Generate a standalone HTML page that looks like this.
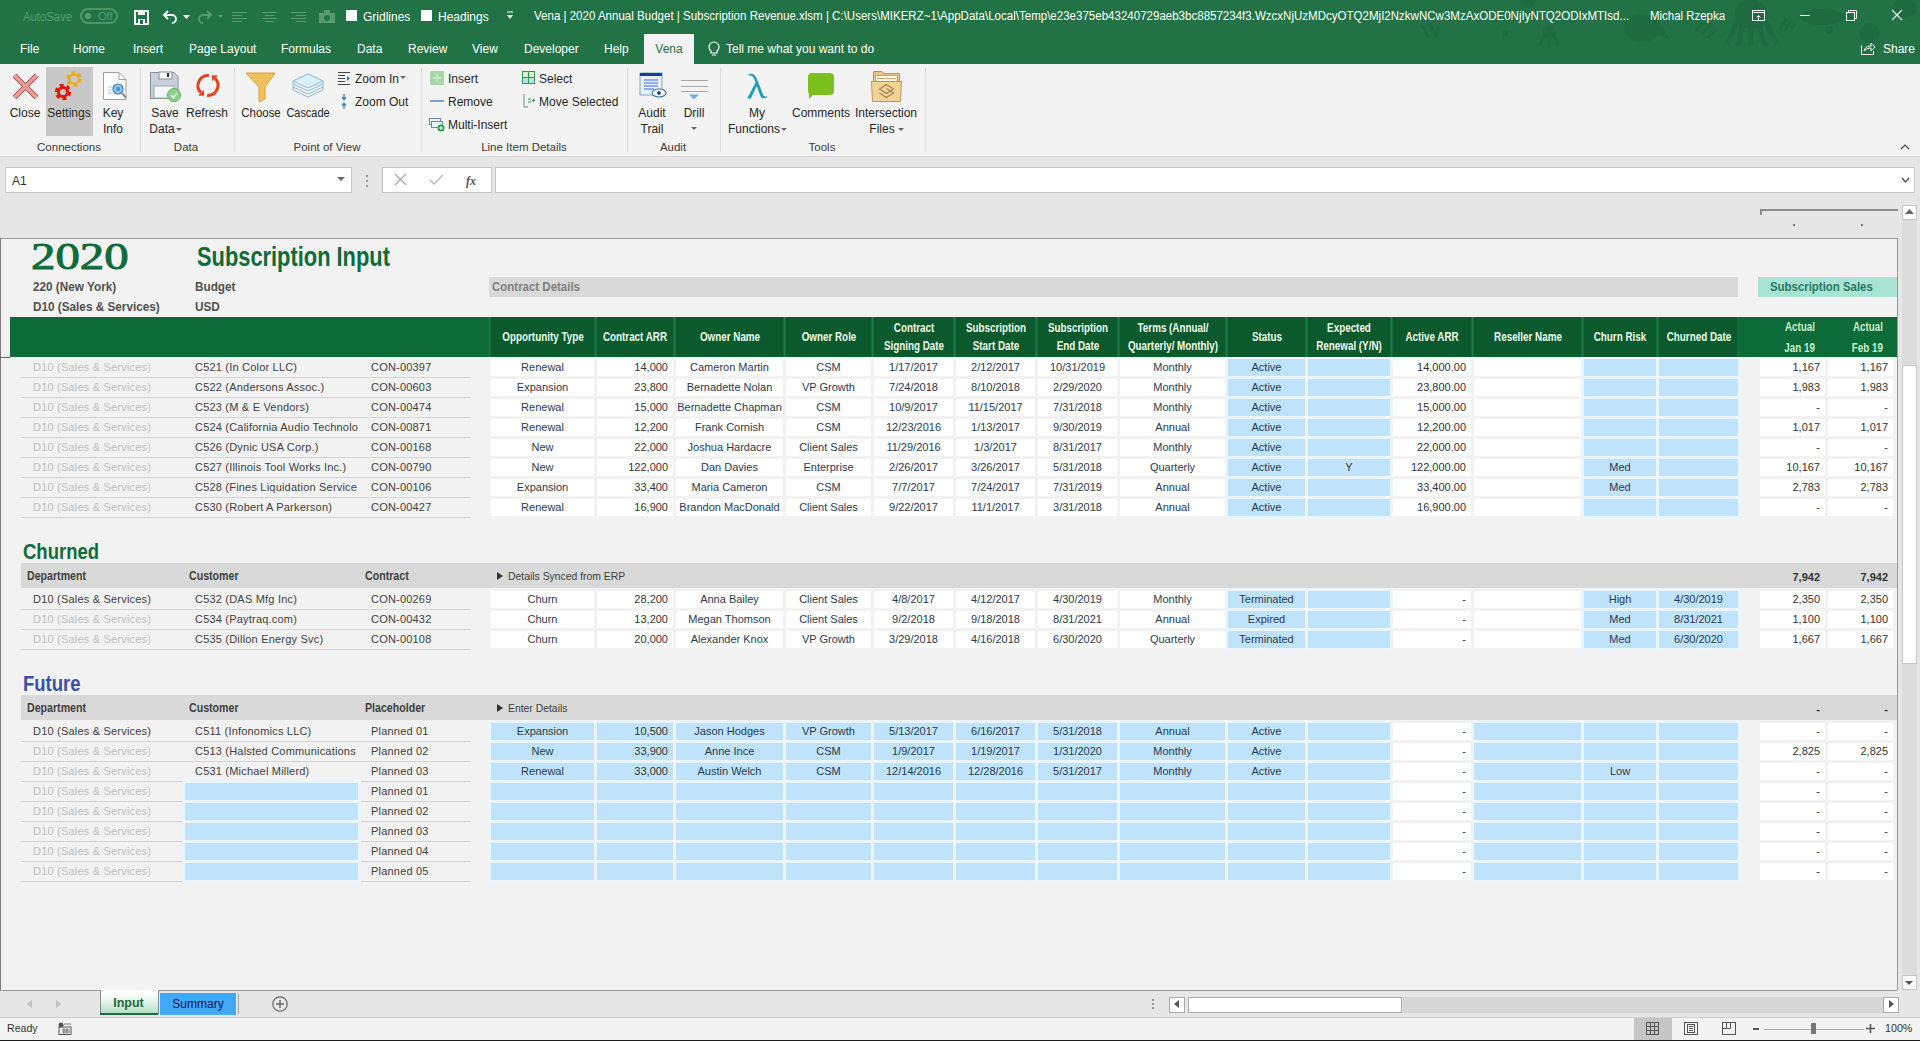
<!DOCTYPE html><html><head><meta charset="utf-8"><style>
html,body{margin:0;padding:0;width:1920px;height:1041px;overflow:hidden;background:#f2f2f2;font-family:"Liberation Sans", sans-serif;}
.a{position:absolute;}
.t{position:absolute;line-height:1;white-space:nowrap;}
svg{position:absolute;overflow:visible;}
</style></head><body>
<div class="a" style="left:0px;top:0px;width:1920px;height:64px;background:#217346;"></div>
<svg style="left:1380px;top:0px" width="540" height="64"><ellipse cx="371" cy="14" rx="16" ry="15" fill="#1e6b42"/><path d="M356 22 Q352 36 348 42 M362 26 Q360 38 358 44 M371 28 V44 M380 26 Q382 38 385 44 M386 22 Q392 36 396 42" stroke="#1e6b42" stroke-width="5" stroke-linecap="round" fill="none"/><ellipse cx="442" cy="17" rx="22" ry="8" fill="#1e6b42"/><path d="M462 17 L472 9 L472 25 Z" fill="#1e6b42"/><circle cx="490" cy="33" r="10" fill="#1e6b42"/><circle cx="449" cy="30" r="4" fill="#1e6b42"/><ellipse cx="262" cy="28" rx="18" ry="14" fill="#1e6b42"/><path d="M275 34 L290 40 L282 26Z" fill="#1e6b42"/><path d="M400 28 L406 20 M406 30 L410 22 M412 28 L416 22" stroke="#1e6b42" stroke-width="3" stroke-linecap="round"/><path d="M322 34 L330 26 M328 38 L336 30 M316 30 L322 24" stroke="#1e6b42" stroke-width="3" stroke-linecap="round"/><circle cx="169" cy="33" r="7" fill="#1e6b42"/><path d="M163 38 L160 44 M169 40 V46 M175 38 L178 44" stroke="#1e6b42" stroke-width="3" stroke-linecap="round"/><circle cx="125" cy="33" r="3" fill="#1e6b42"/><path d="M42 26 L48 36 M50 24 L54 34 M58 28 L56 36" stroke="#1e6b42" stroke-width="3" stroke-linecap="round"/><ellipse cx="148" cy="2" rx="8" ry="6" fill="#1e6b42"/><ellipse cx="525" cy="8" rx="12" ry="10" fill="#1e6b42"/></svg>
<div class="t" style="top:10.84px;font-size:12px;color:#5a9a72;left:23px;transform:scaleX(0.94);transform-origin:left top;">AutoSave</div>
<div class="a" style="left:80px;top:8px;width:34px;height:12px;border:2px solid #4f9468;border-radius:8px;"></div>
<div class="a" style="left:85px;top:13px;width:6px;height:6px;border-radius:50%;background:#5a9a72;"></div>
<div class="t" style="top:10.69px;font-size:11px;color:#5a9a72;left:98px;">Off</div>
<svg style="left:134px;top:10px" width="15" height="15"><rect x="1" y="1" width="13" height="13" fill="none" stroke="#fff" stroke-width="2"/><rect x="4" y="1" width="7" height="4" fill="#fff"/><rect x="4" y="9" width="7" height="5" fill="#fff"/><rect x="6" y="10" width="3" height="4" fill="#217346"/></svg>
<svg style="left:162px;top:9px" width="16" height="14"><path d="M6 2 L2 6 L6 10 M2 6 H10 A4 4 0 0 1 10 14" fill="none" stroke="#fff" stroke-width="1.8"/></svg>
<svg style="left:183px;top:15px" width="7" height="4"><path d="M0 0 H7 L3.5 4Z" fill="#fff"/></svg>
<svg style="left:197px;top:9px" width="16" height="14"><path d="M10 2 L14 6 L10 10 M14 6 H6 A4 4 0 0 0 6 14" fill="none" stroke="#5a9a72" stroke-width="1.8"/></svg>
<svg style="left:218px;top:15px" width="5" height="3"><path d="M0 0 H5 L2.5 3Z" fill="#5a9a72"/></svg>
<svg style="left:232px;top:11px" width="16" height="12"><path d="M0 1.5H15M0 4.5H10M0 7.5H15M0 10.5H10" stroke="#5a9a72" stroke-width="1"/></svg>
<svg style="left:262px;top:11px" width="16" height="12"><path d="M0 1.5H15M2.5 4.5H12.5M0 7.5H15M2.5 10.5H12.5" stroke="#5a9a72" stroke-width="1"/></svg>
<svg style="left:291px;top:11px" width="16" height="12"><path d="M0 1.5H15M5 4.5H15M0 7.5H15M5 10.5H15" stroke="#5a9a72" stroke-width="1"/></svg>
<svg style="left:319px;top:10px" width="16" height="13"><rect x="0" y="3" width="16" height="10" fill="#5a9a72"/><rect x="5" y="0" width="6" height="4" fill="#5a9a72"/><circle cx="8" cy="8" r="3" fill="#217346"/></svg>
<div class="a" style="left:346px;top:10px;width:11px;height:11px;background:#fff;"></div>
<div class="t" style="top:10.84px;font-size:12px;color:#ffffff;left:363px;">Gridlines</div>
<div class="a" style="left:421px;top:10px;width:11px;height:11px;background:#fff;"></div>
<div class="t" style="top:10.84px;font-size:12px;color:#ffffff;left:438px;">Headings</div>
<svg style="left:506px;top:11px" width="8" height="10"><path d="M1 1H7" stroke="#fff" stroke-width="1"/><path d="M1 4H7L4 8Z" fill="#fff"/></svg>
<div class="t" style="top:9.84px;font-size:12px;color:#ffffff;left:534px;transform:scaleX(0.961);transform-origin:left top;">Vena | 2020 Annual Budget | Subscription Revenue.xlsm | C:\Users\MIKERZ~1\AppData\Local\Temp\e23e375eb43240729aeb3bc8857234f3.WzcxNjUzMDcyOTQ2MjI2NzkwNCw3MzAxODE0NjIyNTQ2ODIxMTIsd...</div>
<div class="t" style="top:9.84px;font-size:12px;color:#ffffff;left:1650px;transform:scaleX(0.953);transform-origin:left top;">Michal Rzepka</div>
<svg style="left:1750px;top:8px" width="18" height="16"><rect x="2.5" y="2.5" width="12" height="10" fill="none" stroke="#fff"/><path d="M2.5 4.5H14.5" stroke="#fff"/><path d="M8.5 12.5V7.5M6.5 9.5L8.5 7.5L10.5 9.5" fill="none" stroke="#fff"/></svg>
<svg style="left:1798px;top:8px" width="14" height="16"><path d="M2 7.5H12" stroke="#fff"/></svg>
<svg style="left:1844px;top:8px" width="14" height="16"><rect x="2.5" y="4.5" width="8" height="8" fill="none" stroke="#fff"/><path d="M4.5 4.5V2.5H12.5V10.5H10.5" fill="none" stroke="#fff"/></svg>
<svg style="left:1890px;top:8px" width="14" height="16"><path d="M2 2L12 12M12 2L2 12" stroke="#fff" stroke-width="1.1"/></svg>
<div class="t" style="top:42.84px;font-size:12px;color:#ffffff;left:20px;">File</div>
<div class="t" style="top:42.84px;font-size:12px;color:#ffffff;left:73px;">Home</div>
<div class="t" style="top:42.84px;font-size:12px;color:#ffffff;left:133px;">Insert</div>
<div class="t" style="top:42.84px;font-size:12px;color:#ffffff;left:189px;">Page Layout</div>
<div class="t" style="top:42.84px;font-size:12px;color:#ffffff;left:281px;">Formulas</div>
<div class="t" style="top:42.84px;font-size:12px;color:#ffffff;left:357px;">Data</div>
<div class="t" style="top:42.84px;font-size:12px;color:#ffffff;left:408px;">Review</div>
<div class="t" style="top:42.84px;font-size:12px;color:#ffffff;left:472px;">View</div>
<div class="t" style="top:42.84px;font-size:12px;color:#ffffff;left:524px;">Developer</div>
<div class="t" style="top:42.84px;font-size:12px;color:#ffffff;left:604px;">Help</div>
<div class="a" style="left:644px;top:34px;width:50px;height:30px;background:#f3f3f3;"></div>
<div class="t" style="top:42.84px;font-size:12px;color:#217346;left:644.0px;width:50px;text-align:center;">Vena</div>
<svg style="left:708px;top:41px" width="12" height="15"><path d="M3 10 A5 5 0 1 1 9 10 V12 H3 Z" fill="none" stroke="#fff" stroke-width="1.2"/><path d="M4 14H8" stroke="#fff"/></svg>
<div class="t" style="top:42.84px;font-size:12px;color:#ffffff;left:726px;">Tell me what you want to do</div>
<svg style="left:1860px;top:40px" width="16" height="16"><path d="M1.5 5V14.5H13.5V11" fill="none" stroke="#fff"/><path d="M4 11 C5 7 8 6 11 6 V3 L15 7 L11 11 V8 C8 8 6 9 4 11Z" fill="none" stroke="#fff"/></svg>
<div class="t" style="top:42.84px;font-size:12px;color:#ffffff;left:1883px;">Share</div>
<div class="a" style="left:0px;top:64px;width:1920px;height:92px;background:#f3f3f3;"></div>
<div class="a" style="left:0px;top:156px;width:1920px;height:1px;background:#d5d5d5;"></div>
<div class="a" style="left:140px;top:68px;width:1px;height:84px;background:#d9d9d9;"></div>
<div class="a" style="left:234px;top:68px;width:1px;height:84px;background:#d9d9d9;"></div>
<div class="a" style="left:421px;top:68px;width:1px;height:84px;background:#d9d9d9;"></div>
<div class="a" style="left:627px;top:68px;width:1px;height:84px;background:#d9d9d9;"></div>
<div class="a" style="left:720px;top:68px;width:1px;height:84px;background:#d9d9d9;"></div>
<div class="a" style="left:925px;top:68px;width:1px;height:84px;background:#d9d9d9;"></div>
<div class="t" style="top:142.27px;font-size:11.5px;color:#3a3a3a;left:-31.0px;width:200px;text-align:center;">Connections</div>
<div class="t" style="top:142.27px;font-size:11.5px;color:#3a3a3a;left:86.0px;width:200px;text-align:center;">Data</div>
<div class="t" style="top:142.27px;font-size:11.5px;color:#3a3a3a;left:227.0px;width:200px;text-align:center;">Point of View</div>
<div class="t" style="top:142.27px;font-size:11.5px;color:#3a3a3a;left:424.0px;width:200px;text-align:center;">Line Item Details</div>
<div class="t" style="top:142.27px;font-size:11.5px;color:#3a3a3a;left:573.0px;width:200px;text-align:center;">Audit</div>
<div class="t" style="top:142.27px;font-size:11.5px;color:#3a3a3a;left:722.0px;width:200px;text-align:center;">Tools</div>
<div class="a" style="left:46px;top:67px;width:47px;height:69px;background:#c8c8c8;"></div>
<svg style="left:12px;top:73px" width="27" height="27"><path d="M2.5 2.5L24.5 24.5M24.5 2.5L2.5 24.5" stroke="#9a4a4a" stroke-width="5.2"/><path d="M2.5 2.5L24.5 24.5M24.5 2.5L2.5 24.5" stroke="#f39a9a" stroke-width="3.4"/></svg>
<div class="t" style="top:106.84px;font-size:12px;color:#262626;left:-5.0px;width:60px;text-align:center;">Close</div>
<svg style="left:54px;top:70px" width="32" height="32"><circle cx="20" cy="9" r="6.3" fill="none" stroke="#f0a818" stroke-width="3" stroke-dasharray="3.6 3"/><circle cx="20" cy="9" r="4.6" fill="none" stroke="#f0a818" stroke-width="2.2"/><circle cx="9" cy="22" r="6.6" fill="none" stroke="#e01808" stroke-width="3.2" stroke-dasharray="3.9 3"/><circle cx="9" cy="22" r="4.6" fill="none" stroke="#e01808" stroke-width="3"/></svg>
<div class="t" style="top:106.84px;font-size:12px;color:#262626;left:39.0px;width:60px;text-align:center;">Settings</div>
<svg style="left:103px;top:72px" width="26" height="30"><path d="M0.5 0.5H16L23 7.5V27.5H0.5Z" fill="#fff" stroke="#a0a0a0"/><path d="M16 0.5V7.5H23" fill="none" stroke="#a0a0a0"/><path d="M5 15H9M5 18H9M5 21H9" stroke="#b0c4de"/><circle cx="15" cy="17" r="5" fill="#8fd0f0" stroke="#3a7ab0" stroke-width="1.2"/><path d="M13 16H17M13 18H17" stroke="#2a5a90"/><path d="M19 21L23 26" stroke="#808080" stroke-width="2"/></svg>
<div class="t" style="top:106.84px;font-size:12px;color:#262626;left:83.0px;width:60px;text-align:center;">Key</div>
<div class="t" style="top:122.84px;font-size:12px;color:#262626;left:83.0px;width:60px;text-align:center;">Info</div>
<svg style="left:150px;top:71px" width="32" height="32"><path d="M0.5 1.5H24L28 5.5V27.5H0.5Z" fill="#c8d0dc" stroke="#8090a0"/><rect x="9" y="1" width="13" height="7" fill="#fff" stroke="#8090a0"/><rect x="17" y="2" width="2" height="4" fill="#333"/><rect x="4" y="15" width="20" height="12" fill="#f4f8fc" stroke="#9aa"/><circle cx="24" cy="24" r="6.5" fill="#8ad28a" stroke="#60b060"/><path d="M21 24L23.5 26.5L27 22" fill="none" stroke="#fff" stroke-width="1.5"/></svg>
<div class="t" style="top:106.84px;font-size:12px;color:#262626;left:135.0px;width:60px;text-align:center;">Save</div>
<div class="t" style="top:122.84px;font-size:12px;color:#262626;left:132.0px;width:60px;text-align:center;">Data</div>
<svg style="left:176px;top:128px" width="6" height="3"><path d="M0 0H6L3 3Z" fill="#666"/></svg>
<svg style="left:194px;top:72px" width="28" height="28"><path d="M14.87 3.54 A10 10 0 0 0 6.93 20.57" fill="none" stroke="#e8401c" stroke-width="3"/><path d="M10.1 23.75L9.76 17.74L4.1 23.4Z" fill="#e8401c"/><path d="M13.13 23.46 A10 10 0 0 0 21.07 6.43" fill="none" stroke="#e8401c" stroke-width="3"/><path d="M17.9 3.25L23.9 3.6L18.24 9.26Z" fill="#e8401c"/></svg>
<div class="t" style="top:106.84px;font-size:12px;color:#262626;left:177.0px;width:60px;text-align:center;">Refresh</div>
<svg style="left:245px;top:72px" width="32" height="30"><path d="M1 1H30L20 15V27L14 30V15Z" fill="#f0c060" stroke="#d8a030"/></svg>
<div class="t" style="top:106.84px;font-size:12px;color:#262626;left:231.3px;width:60px;text-align:center;transform:scaleX(0.955);transform-origin:center top;">Choose</div>
<svg style="left:292px;top:73px" width="32" height="26"><path d="M16 1L31 8L16 15L1 8Z" fill="#d8f0ff" stroke="#8ab8d8"/><path d="M1 11L16 18L31 11M1 14L16 21L31 14M1 8V17L16 24L31 17V8" fill="none" stroke="#8ab8d8"/></svg>
<div class="t" style="top:106.84px;font-size:12px;color:#262626;left:278.4px;width:60px;text-align:center;transform:scaleX(0.91);transform-origin:center top;">Cascade</div>
<svg style="left:338px;top:72px" width="13" height="13"><path d="M0 0.5H12M0 3.5H7M0 6.5H7M0 9.5H7M0 12.5H12" stroke="#444"/><path d="M9 4L12 6.5L9 9Z" fill="#3a7ab0"/></svg>
<div class="t" style="top:72.84px;font-size:12px;color:#262626;left:355px;">Zoom In</div>
<svg style="left:400px;top:76px" width="6" height="3"><path d="M0 0H6L3 3Z" fill="#666"/></svg>
<svg style="left:341px;top:94px" width="6" height="15"><path d="M3 0V5M1 3L3 6L5 3M3 15V10M1 12L3 9L5 12" fill="none" stroke="#3a7ab0" stroke-width="1.2"/></svg>
<div class="t" style="top:95.84px;font-size:12px;color:#262626;left:355px;">Zoom Out</div>
<svg style="left:430px;top:71px" width="14" height="14"><rect width="14" height="14" fill="#a8d8a8"/><path d="M7 3V11M3 7H11" stroke="#c8ecc8" stroke-width="1.5"/></svg>
<div class="t" style="top:72.84px;font-size:12px;color:#262626;left:448px;">Insert</div>
<div class="a" style="left:430px;top:100px;width:14px;height:2px;background:#7aa0e0;"></div>
<div class="t" style="top:95.84px;font-size:12px;color:#262626;left:448px;">Remove</div>
<svg style="left:429px;top:118px" width="16" height="13"><rect x="0.5" y="0.5" width="11" height="6" fill="#e8f0f8" stroke="#6a8ab0"/><rect x="2.5" y="3.5" width="11" height="6" fill="#e8f0f8" stroke="#6a8ab0"/><circle cx="12" cy="10" r="3.5" fill="#20a040"/><path d="M10 10H14M12 8V12" stroke="#fff"/></svg>
<div class="t" style="top:118.84px;font-size:12px;color:#262626;left:448px;">Multi-Insert</div>
<svg style="left:522px;top:71px" width="13" height="13"><rect x="0.5" y="0.5" width="12" height="12" fill="#d8f0e0" stroke="#2a9a50"/><path d="M6.5 0V13M0 6.5H13" stroke="#2a9a50"/><rect x="1" y="7" width="5" height="5" fill="#c0dcf0"/><rect x="7" y="7" width="5" height="5" fill="#c0dcf0"/></svg>
<div class="t" style="top:72.84px;font-size:12px;color:#262626;left:539px;">Select</div>
<svg style="left:523px;top:94px" width="12" height="14"><path d="M1 0V13H5" fill="none" stroke="#6a8ab0"/><path d="M5 5H8M5 8H8M9 6.5H12M10.5 5V8" stroke="#2a9a50"/></svg>
<div class="t" style="top:95.84px;font-size:12px;color:#262626;left:539px;">Move Selected</div>
<svg style="left:640px;top:73px" width="27" height="26"><rect x="0" y="0" width="22" height="22" fill="#e8f0fc" stroke="#8ab"/><rect x="0" y="0" width="22" height="3" fill="#1a3aa0"/><path d="M4 7H18M4 10H18M4 13H18M4 16H14" stroke="#3a6ad0" stroke-width="1.2"/><ellipse cx="19" cy="20" rx="7" ry="4" fill="#fff" stroke="#2a7a9a" stroke-width="1.2"/><circle cx="19" cy="20" r="2" fill="#1a5a7a"/></svg>
<div class="t" style="top:106.84px;font-size:12px;color:#262626;left:622.0px;width:60px;text-align:center;">Audit</div>
<div class="t" style="top:122.84px;font-size:12px;color:#262626;left:622.0px;width:60px;text-align:center;">Trail</div>
<svg style="left:680px;top:79px" width="29" height="22"><path d="M1 1.5H28M1 7.5H28M1 12.5H28" stroke="#a8a8a8" stroke-width="1"/><path d="M9 15.5H19L14 20.5Z" fill="#6aaee8"/></svg>
<div class="t" style="top:106.84px;font-size:12px;color:#262626;left:664.0px;width:60px;text-align:center;">Drill</div>
<svg style="left:691px;top:127px" width="6" height="3"><path d="M0 0H6L3 3Z" fill="#666"/></svg>
<svg style="left:746px;top:72px" width="24" height="28"><path d="M2.5 2.2 C7.5 0.8 9.5 3 11.5 8.5 L17 22.5 C17.8 24.5 19 25 21 24.2 L21.3 25.3 C18 27.2 15.3 26.5 14.2 23.5 L10.8 14 L4.8 26.5 H1.2 L9.6 10.6 L8.2 7 C7 4 5.5 3.2 2.8 3.6 Z" fill="#1aa0b0"/></svg>
<div class="t" style="top:106.84px;font-size:12px;color:#262626;left:727.0px;width:60px;text-align:center;">My</div>
<div class="t" style="top:122.84px;font-size:12px;color:#262626;left:714.0px;width:80px;text-align:center;">Functions</div>
<svg style="left:781px;top:128px" width="6" height="3"><path d="M0 0H6L3 3Z" fill="#666"/></svg>
<svg style="left:808px;top:73px" width="27" height="26"><rect x="0" y="0" width="26" height="22" rx="4" fill="#7cc020"/><path d="M1 18L1 26L7 20Z" fill="#7cc020"/></svg>
<div class="t" style="top:106.84px;font-size:12px;color:#262626;left:781.0px;width:80px;text-align:center;">Comments</div>
<svg style="left:871px;top:70px" width="32" height="33"><path d="M2.5 1.5H11L13 3.5H28.5V12H2.5Z" fill="#e6c68a" stroke="#b8965a"/><rect x="4.5" y="5.5" width="22" height="6" fill="#fbf6ea" stroke="#c8a86a"/><path d="M6 8.5H25" stroke="#c8a86a"/><path d="M0.5 11.5H30.5L29.5 31.5H1.5Z" fill="#f2d498" stroke="#b8965a"/><path d="M15.5 14.5L22.5 19L15.5 23.5L8.5 19Z M15.5 18.5L22.5 23L15.5 27.5L8.5 23" fill="none" stroke="#a08048" stroke-width="1.1"/></svg>
<div class="t" style="top:106.84px;font-size:12px;color:#262626;left:846.0px;width:80px;text-align:center;">Intersection</div>
<div class="t" style="top:122.84px;font-size:12px;color:#262626;left:842.0px;width:80px;text-align:center;">Files</div>
<svg style="left:898px;top:128px" width="6" height="3"><path d="M0 0H6L3 3Z" fill="#666"/></svg>
<svg style="left:1900px;top:144px" width="10" height="6"><path d="M1 5L5 1L9 5" fill="none" stroke="#444" stroke-width="1.2"/></svg>
<div class="a" style="left:0px;top:157px;width:1920px;height:81px;background:#e6e6e6;"></div>
<div class="a" style="left:5px;top:167px;width:345px;height:24px;background:#fff;border:1px solid #c6c6c6;"></div>
<div class="t" style="top:174.84px;font-size:12px;color:#333;left:12px;">A1</div>
<svg style="left:337px;top:177px" width="8" height="4"><path d="M0 0H8L4 4Z" fill="#666"/></svg>
<div class="a" style="left:366px;top:175px;width:2px;height:2px;background:#999;"></div>
<div class="a" style="left:366px;top:180px;width:2px;height:2px;background:#999;"></div>
<div class="a" style="left:366px;top:185px;width:2px;height:2px;background:#999;"></div>
<div class="a" style="left:382px;top:167px;width:108px;height:24px;background:#fff;border:1px solid #c6c6c6;"></div>
<svg style="left:395px;top:174px" width="11" height="11"><path d="M0 0L11 11M11 0L0 11" stroke="#aaa" stroke-width="1.3"/></svg>
<svg style="left:430px;top:175px" width="13" height="10"><path d="M0 5L4 9L13 0" fill="none" stroke="#bbb" stroke-width="1.5"/></svg>
<div class="t" style="top:174.84px;font-size:12px;color:#555;left:466px;font-family:'Liberation Serif',serif;font-style:italic;font-weight:bold;">fx</div>
<div class="a" style="left:495px;top:167px;width:1418px;height:24px;background:#fff;border:1px solid #c6c6c6;"></div>
<svg style="left:1901px;top:177px" width="9" height="6"><path d="M1 1L4.5 5L8 1" fill="none" stroke="#555" stroke-width="1.4"/></svg>
<div class="a" style="left:1760px;top:209px;width:138px;height:2px;background:#8c8c8c;"></div>
<div class="a" style="left:1760px;top:209px;width:2px;height:6px;background:#8c8c8c;"></div>
<div class="a" style="left:1793px;top:224px;width:2px;height:2px;background:#777;"></div>
<div class="a" style="left:1861px;top:224px;width:2px;height:2px;background:#777;"></div>
<div class="a" style="left:0px;top:238px;width:1897px;height:752px;background:#f2f2f2;"></div>
<div class="a" style="left:0px;top:238px;width:1897px;height:1px;background:#9a9a9a;"></div>
<div class="a" style="left:0px;top:238px;width:1px;height:752px;background:#7a7a7a;"></div>
<div class="a" style="left:1897px;top:238px;width:1px;height:752px;background:#9a9a9a;"></div>
<div class="a" style="left:0px;top:990px;width:1897px;height:1px;background:#9a9a9a;"></div>
<div class="t" style="top:237.68px;font-size:37px;color:#0e6b3a;left:31px;transform:scaleX(1.32);transform-origin:left top;font-family:'Liberation Serif',serif;-webkit-text-stroke:0.9px #0e6b3a;">2020</div>
<div class="t" style="top:243.30px;font-size:28px;color:#0e6b3a;font-weight:bold;left:197px;transform:scaleX(0.78);transform-origin:left top;">Subscription Input</div>
<div class="t" style="top:281.42px;font-size:12.5px;color:#505050;font-weight:bold;left:33px;transform:scaleX(0.94);transform-origin:left top;">220 (New York)</div>
<div class="t" style="top:301.42px;font-size:12.5px;color:#505050;font-weight:bold;left:33px;transform:scaleX(0.94);transform-origin:left top;">D10 (Sales &amp; Services)</div>
<div class="t" style="top:281.42px;font-size:12.5px;color:#505050;font-weight:bold;left:195px;transform:scaleX(0.94);transform-origin:left top;">Budget</div>
<div class="t" style="top:301.42px;font-size:12.5px;color:#505050;font-weight:bold;left:195px;transform:scaleX(0.94);transform-origin:left top;">USD</div>
<div class="a" style="left:489px;top:277px;width:1249px;height:20px;background:#d9d9d9;"></div>
<div class="t" style="top:281.42px;font-size:12.5px;color:#7f7f7f;font-weight:bold;left:492px;transform:scaleX(0.918);transform-origin:left top;">Contract Details</div>
<div class="a" style="left:1758px;top:277px;width:139px;height:20px;background:#a9e3d4;"></div>
<div class="t" style="top:281.42px;font-size:12.5px;color:#1f7a60;font-weight:bold;left:1770px;transform:scaleX(0.913);transform-origin:left top;">Subscription Sales</div>
<div class="a" style="left:10px;top:317px;width:1887px;height:40px;background:#0d6b39;"></div>
<div class="a" style="left:489px;top:317px;width:1248px;height:40px;background:#0b5a2d;"></div>
<div class="a" style="left:594px;top:317px;width:3px;height:40px;background:#136c3b;"></div>
<div class="a" style="left:595px;top:317px;width:1px;height:40px;background:#1b7a45;"></div>
<div class="a" style="left:673px;top:317px;width:3px;height:40px;background:#136c3b;"></div>
<div class="a" style="left:674px;top:317px;width:1px;height:40px;background:#1b7a45;"></div>
<div class="a" style="left:783px;top:317px;width:3px;height:40px;background:#136c3b;"></div>
<div class="a" style="left:784px;top:317px;width:1px;height:40px;background:#1b7a45;"></div>
<div class="a" style="left:871px;top:317px;width:3px;height:40px;background:#136c3b;"></div>
<div class="a" style="left:872px;top:317px;width:1px;height:40px;background:#1b7a45;"></div>
<div class="a" style="left:953px;top:317px;width:3px;height:40px;background:#136c3b;"></div>
<div class="a" style="left:954px;top:317px;width:1px;height:40px;background:#1b7a45;"></div>
<div class="a" style="left:1035px;top:317px;width:3px;height:40px;background:#136c3b;"></div>
<div class="a" style="left:1036px;top:317px;width:1px;height:40px;background:#1b7a45;"></div>
<div class="a" style="left:1117px;top:317px;width:3px;height:40px;background:#136c3b;"></div>
<div class="a" style="left:1118px;top:317px;width:1px;height:40px;background:#1b7a45;"></div>
<div class="a" style="left:1225px;top:317px;width:3px;height:40px;background:#136c3b;"></div>
<div class="a" style="left:1226px;top:317px;width:1px;height:40px;background:#1b7a45;"></div>
<div class="a" style="left:1305px;top:317px;width:3px;height:40px;background:#136c3b;"></div>
<div class="a" style="left:1306px;top:317px;width:1px;height:40px;background:#1b7a45;"></div>
<div class="a" style="left:1390px;top:317px;width:3px;height:40px;background:#136c3b;"></div>
<div class="a" style="left:1391px;top:317px;width:1px;height:40px;background:#1b7a45;"></div>
<div class="a" style="left:1471px;top:317px;width:3px;height:40px;background:#136c3b;"></div>
<div class="a" style="left:1472px;top:317px;width:1px;height:40px;background:#1b7a45;"></div>
<div class="a" style="left:1581px;top:317px;width:3px;height:40px;background:#136c3b;"></div>
<div class="a" style="left:1582px;top:317px;width:1px;height:40px;background:#1b7a45;"></div>
<div class="a" style="left:1656px;top:317px;width:3px;height:40px;background:#136c3b;"></div>
<div class="a" style="left:1657px;top:317px;width:1px;height:40px;background:#1b7a45;"></div>
<div class="a" style="left:488px;top:317px;width:3px;height:40px;background:#136c3b;"></div>
<div class="a" style="left:489px;top:317px;width:1px;height:40px;background:#1b7a45;"></div>
<div class="a" style="left:1737px;top:317px;width:3px;height:40px;background:#136c3b;"></div>
<div class="t" style="top:330.84px;font-size:12px;color:#eefaea;font-weight:bold;left:442.5px;width:200px;text-align:center;transform:scaleX(0.82);transform-origin:center top;">Opportunity Type</div>
<div class="t" style="top:330.84px;font-size:12px;color:#eefaea;font-weight:bold;left:535.0px;width:200px;text-align:center;transform:scaleX(0.82);transform-origin:center top;">Contract ARR</div>
<div class="t" style="top:330.84px;font-size:12px;color:#eefaea;font-weight:bold;left:629.5px;width:200px;text-align:center;transform:scaleX(0.82);transform-origin:center top;">Owner Name</div>
<div class="t" style="top:330.84px;font-size:12px;color:#eefaea;font-weight:bold;left:728.5px;width:200px;text-align:center;transform:scaleX(0.82);transform-origin:center top;">Owner Role</div>
<div class="t" style="top:321.84px;font-size:12px;color:#eefaea;font-weight:bold;left:813.5px;width:200px;text-align:center;transform:scaleX(0.82);transform-origin:center top;">Contract</div>
<div class="t" style="top:339.84px;font-size:12px;color:#eefaea;font-weight:bold;left:813.5px;width:200px;text-align:center;transform:scaleX(0.82);transform-origin:center top;">Signing Date</div>
<div class="t" style="top:321.84px;font-size:12px;color:#eefaea;font-weight:bold;left:895.5px;width:200px;text-align:center;transform:scaleX(0.82);transform-origin:center top;">Subscription</div>
<div class="t" style="top:339.84px;font-size:12px;color:#eefaea;font-weight:bold;left:895.5px;width:200px;text-align:center;transform:scaleX(0.82);transform-origin:center top;">Start Date</div>
<div class="t" style="top:321.84px;font-size:12px;color:#eefaea;font-weight:bold;left:977.5px;width:200px;text-align:center;transform:scaleX(0.82);transform-origin:center top;">Subscription</div>
<div class="t" style="top:339.84px;font-size:12px;color:#eefaea;font-weight:bold;left:977.5px;width:200px;text-align:center;transform:scaleX(0.82);transform-origin:center top;">End Date</div>
<div class="t" style="top:321.84px;font-size:12px;color:#eefaea;font-weight:bold;left:1072.5px;width:200px;text-align:center;transform:scaleX(0.82);transform-origin:center top;">Terms (Annual/</div>
<div class="t" style="top:339.84px;font-size:12px;color:#eefaea;font-weight:bold;left:1072.5px;width:200px;text-align:center;transform:scaleX(0.82);transform-origin:center top;">Quarterly/ Monthly)</div>
<div class="t" style="top:330.84px;font-size:12px;color:#eefaea;font-weight:bold;left:1166.5px;width:200px;text-align:center;transform:scaleX(0.82);transform-origin:center top;">Status</div>
<div class="t" style="top:321.84px;font-size:12px;color:#eefaea;font-weight:bold;left:1249.0px;width:200px;text-align:center;transform:scaleX(0.82);transform-origin:center top;">Expected</div>
<div class="t" style="top:339.84px;font-size:12px;color:#eefaea;font-weight:bold;left:1249.0px;width:200px;text-align:center;transform:scaleX(0.82);transform-origin:center top;">Renewal (Y/N)</div>
<div class="t" style="top:330.84px;font-size:12px;color:#eefaea;font-weight:bold;left:1332.0px;width:200px;text-align:center;transform:scaleX(0.82);transform-origin:center top;">Active ARR</div>
<div class="t" style="top:330.84px;font-size:12px;color:#eefaea;font-weight:bold;left:1427.5px;width:200px;text-align:center;transform:scaleX(0.82);transform-origin:center top;">Reseller Name</div>
<div class="t" style="top:330.84px;font-size:12px;color:#eefaea;font-weight:bold;left:1520.0px;width:200px;text-align:center;transform:scaleX(0.82);transform-origin:center top;">Churn Risk</div>
<div class="t" style="top:330.84px;font-size:12px;color:#eefaea;font-weight:bold;left:1598.5px;width:200px;text-align:center;transform:scaleX(0.82);transform-origin:center top;">Churned Date</div>
<div class="t" style="top:320.84px;font-size:12px;color:#c8f0c8;font-weight:bold;left:1715px;width:100px;text-align:right;transform:scaleX(0.82);transform-origin:right top;">Actual</div>
<div class="t" style="top:341.84px;font-size:12px;color:#c8f0c8;font-weight:bold;left:1715px;width:100px;text-align:right;transform:scaleX(0.82);transform-origin:right top;">Jan 19</div>
<div class="t" style="top:320.84px;font-size:12px;color:#c8f0c8;font-weight:bold;left:1783px;width:100px;text-align:right;transform:scaleX(0.82);transform-origin:right top;">Actual</div>
<div class="t" style="top:341.84px;font-size:12px;color:#c8f0c8;font-weight:bold;left:1783px;width:100px;text-align:right;transform:scaleX(0.82);transform-origin:right top;">Feb 19</div>
<div class="a" style="left:0px;top:357px;width:10px;height:1px;background:#666;"></div>
<div class="a" style="left:489px;top:357px;width:1250px;height:2px;background:#eef6f1;"></div>
<div class="a" style="left:1758px;top:357px;width:139px;height:2px;background:#eef6f1;"></div>
<div class="t" style="top:361.69px;font-size:11px;color:#c0c0c0;letter-spacing:0.2px;left:33px;">D10 (Sales &amp; Services)</div>
<div class="t" style="top:361.69px;font-size:11px;color:#404040;letter-spacing:0.2px;left:195px;width:164px;overflow:hidden;">C521 (In Color LLC)</div>
<div class="t" style="top:361.69px;font-size:11px;color:#404040;letter-spacing:0.2px;left:371px;">CON-00397</div>
<div class="a" style="left:21px;top:377px;width:450px;height:1px;background:#d4d4d4;"></div>
<div class="a" style="left:491px;top:359px;width:103px;height:17px;background:#ffffff;"></div>
<div class="t" style="top:361.69px;font-size:11px;color:#2a3a50;left:467.5px;width:150px;text-align:center;">Renewal</div>
<div class="a" style="left:597px;top:359px;width:76px;height:17px;background:#ffffff;"></div>
<div class="t" style="top:361.69px;font-size:11px;color:#333333;left:518px;width:150px;text-align:right;">14,000</div>
<div class="a" style="left:676px;top:359px;width:107px;height:17px;background:#ffffff;"></div>
<div class="t" style="top:361.69px;font-size:11px;color:#2a3a50;left:654.5px;width:150px;text-align:center;">Cameron Martin</div>
<div class="a" style="left:786px;top:359px;width:85px;height:17px;background:#ffffff;"></div>
<div class="t" style="top:361.69px;font-size:11px;color:#2a3a50;left:753.5px;width:150px;text-align:center;">CSM</div>
<div class="a" style="left:874px;top:359px;width:79px;height:17px;background:#ffffff;"></div>
<div class="t" style="top:361.69px;font-size:11px;color:#2a3a50;left:838.5px;width:150px;text-align:center;">1/17/2017</div>
<div class="a" style="left:956px;top:359px;width:79px;height:17px;background:#ffffff;"></div>
<div class="t" style="top:361.69px;font-size:11px;color:#2a3a50;left:920.5px;width:150px;text-align:center;">2/12/2017</div>
<div class="a" style="left:1038px;top:359px;width:79px;height:17px;background:#ffffff;"></div>
<div class="t" style="top:361.69px;font-size:11px;color:#2a3a50;left:1002.5px;width:150px;text-align:center;">10/31/2019</div>
<div class="a" style="left:1120px;top:359px;width:105px;height:17px;background:#ffffff;"></div>
<div class="t" style="top:361.69px;font-size:11px;color:#2a3a50;left:1097.5px;width:150px;text-align:center;">Monthly</div>
<div class="a" style="left:1225px;top:357px;width:83px;height:22px;background:#ecf5fb;"></div>
<div class="a" style="left:1228px;top:359px;width:77px;height:17px;background:#bee3fb;"></div>
<div class="t" style="top:361.69px;font-size:11px;color:#2a3a50;left:1191.5px;width:150px;text-align:center;">Active</div>
<div class="a" style="left:1305px;top:357px;width:88px;height:22px;background:#ecf5fb;"></div>
<div class="a" style="left:1308px;top:359px;width:82px;height:17px;background:#bee3fb;"></div>
<div class="a" style="left:1393px;top:359px;width:78px;height:17px;background:#ffffff;"></div>
<div class="t" style="top:361.69px;font-size:11px;color:#333333;left:1316px;width:150px;text-align:right;">14,000.00</div>
<div class="a" style="left:1474px;top:359px;width:107px;height:17px;background:#ffffff;"></div>
<div class="a" style="left:1581px;top:357px;width:78px;height:22px;background:#ecf5fb;"></div>
<div class="a" style="left:1584px;top:359px;width:72px;height:17px;background:#bee3fb;"></div>
<div class="a" style="left:1656px;top:357px;width:85px;height:22px;background:#ecf5fb;"></div>
<div class="a" style="left:1659px;top:359px;width:79px;height:17px;background:#bee3fb;"></div>
<div class="a" style="left:1760px;top:359px;width:65px;height:17px;background:#ffffff;"></div>
<div class="t" style="top:361.69px;font-size:11px;color:#333333;left:1720px;width:100px;text-align:right;">1,167</div>
<div class="a" style="left:1828px;top:359px;width:65px;height:17px;background:#ffffff;"></div>
<div class="t" style="top:361.69px;font-size:11px;color:#333333;left:1788px;width:100px;text-align:right;">1,167</div>
<div class="t" style="top:381.69px;font-size:11px;color:#c0c0c0;letter-spacing:0.2px;left:33px;">D10 (Sales &amp; Services)</div>
<div class="t" style="top:381.69px;font-size:11px;color:#404040;letter-spacing:0.2px;left:195px;width:164px;overflow:hidden;">C522 (Andersons Assoc.)</div>
<div class="t" style="top:381.69px;font-size:11px;color:#404040;letter-spacing:0.2px;left:371px;">CON-00603</div>
<div class="a" style="left:21px;top:397px;width:450px;height:1px;background:#d4d4d4;"></div>
<div class="a" style="left:491px;top:379px;width:103px;height:17px;background:#ffffff;"></div>
<div class="t" style="top:381.69px;font-size:11px;color:#2a3a50;left:467.5px;width:150px;text-align:center;">Expansion</div>
<div class="a" style="left:597px;top:379px;width:76px;height:17px;background:#ffffff;"></div>
<div class="t" style="top:381.69px;font-size:11px;color:#333333;left:518px;width:150px;text-align:right;">23,800</div>
<div class="a" style="left:676px;top:379px;width:107px;height:17px;background:#ffffff;"></div>
<div class="t" style="top:381.69px;font-size:11px;color:#2a3a50;left:654.5px;width:150px;text-align:center;">Bernadette Nolan</div>
<div class="a" style="left:786px;top:379px;width:85px;height:17px;background:#ffffff;"></div>
<div class="t" style="top:381.69px;font-size:11px;color:#2a3a50;left:753.5px;width:150px;text-align:center;">VP Growth</div>
<div class="a" style="left:874px;top:379px;width:79px;height:17px;background:#ffffff;"></div>
<div class="t" style="top:381.69px;font-size:11px;color:#2a3a50;left:838.5px;width:150px;text-align:center;">7/24/2018</div>
<div class="a" style="left:956px;top:379px;width:79px;height:17px;background:#ffffff;"></div>
<div class="t" style="top:381.69px;font-size:11px;color:#2a3a50;left:920.5px;width:150px;text-align:center;">8/10/2018</div>
<div class="a" style="left:1038px;top:379px;width:79px;height:17px;background:#ffffff;"></div>
<div class="t" style="top:381.69px;font-size:11px;color:#2a3a50;left:1002.5px;width:150px;text-align:center;">2/29/2020</div>
<div class="a" style="left:1120px;top:379px;width:105px;height:17px;background:#ffffff;"></div>
<div class="t" style="top:381.69px;font-size:11px;color:#2a3a50;left:1097.5px;width:150px;text-align:center;">Monthly</div>
<div class="a" style="left:1225px;top:376px;width:83px;height:23px;background:#ecf5fb;"></div>
<div class="a" style="left:1228px;top:379px;width:77px;height:17px;background:#bee3fb;"></div>
<div class="t" style="top:381.69px;font-size:11px;color:#2a3a50;left:1191.5px;width:150px;text-align:center;">Active</div>
<div class="a" style="left:1305px;top:376px;width:88px;height:23px;background:#ecf5fb;"></div>
<div class="a" style="left:1308px;top:379px;width:82px;height:17px;background:#bee3fb;"></div>
<div class="a" style="left:1393px;top:379px;width:78px;height:17px;background:#ffffff;"></div>
<div class="t" style="top:381.69px;font-size:11px;color:#333333;left:1316px;width:150px;text-align:right;">23,800.00</div>
<div class="a" style="left:1474px;top:379px;width:107px;height:17px;background:#ffffff;"></div>
<div class="a" style="left:1581px;top:376px;width:78px;height:23px;background:#ecf5fb;"></div>
<div class="a" style="left:1584px;top:379px;width:72px;height:17px;background:#bee3fb;"></div>
<div class="a" style="left:1656px;top:376px;width:85px;height:23px;background:#ecf5fb;"></div>
<div class="a" style="left:1659px;top:379px;width:79px;height:17px;background:#bee3fb;"></div>
<div class="a" style="left:1760px;top:379px;width:65px;height:17px;background:#ffffff;"></div>
<div class="t" style="top:381.69px;font-size:11px;color:#333333;left:1720px;width:100px;text-align:right;">1,983</div>
<div class="a" style="left:1828px;top:379px;width:65px;height:17px;background:#ffffff;"></div>
<div class="t" style="top:381.69px;font-size:11px;color:#333333;left:1788px;width:100px;text-align:right;">1,983</div>
<div class="t" style="top:401.69px;font-size:11px;color:#c0c0c0;letter-spacing:0.2px;left:33px;">D10 (Sales &amp; Services)</div>
<div class="t" style="top:401.69px;font-size:11px;color:#404040;letter-spacing:0.2px;left:195px;width:164px;overflow:hidden;">C523 (M &amp; E Vendors)</div>
<div class="t" style="top:401.69px;font-size:11px;color:#404040;letter-spacing:0.2px;left:371px;">CON-00474</div>
<div class="a" style="left:21px;top:417px;width:450px;height:1px;background:#d4d4d4;"></div>
<div class="a" style="left:491px;top:399px;width:103px;height:17px;background:#ffffff;"></div>
<div class="t" style="top:401.69px;font-size:11px;color:#2a3a50;left:467.5px;width:150px;text-align:center;">Renewal</div>
<div class="a" style="left:597px;top:399px;width:76px;height:17px;background:#ffffff;"></div>
<div class="t" style="top:401.69px;font-size:11px;color:#333333;left:518px;width:150px;text-align:right;">15,000</div>
<div class="a" style="left:676px;top:399px;width:107px;height:17px;background:#ffffff;"></div>
<div class="t" style="top:401.69px;font-size:11px;color:#2a3a50;left:654.5px;width:150px;text-align:center;">Bernadette Chapman</div>
<div class="a" style="left:786px;top:399px;width:85px;height:17px;background:#ffffff;"></div>
<div class="t" style="top:401.69px;font-size:11px;color:#2a3a50;left:753.5px;width:150px;text-align:center;">CSM</div>
<div class="a" style="left:874px;top:399px;width:79px;height:17px;background:#ffffff;"></div>
<div class="t" style="top:401.69px;font-size:11px;color:#2a3a50;left:838.5px;width:150px;text-align:center;">10/9/2017</div>
<div class="a" style="left:956px;top:399px;width:79px;height:17px;background:#ffffff;"></div>
<div class="t" style="top:401.69px;font-size:11px;color:#2a3a50;left:920.5px;width:150px;text-align:center;">11/15/2017</div>
<div class="a" style="left:1038px;top:399px;width:79px;height:17px;background:#ffffff;"></div>
<div class="t" style="top:401.69px;font-size:11px;color:#2a3a50;left:1002.5px;width:150px;text-align:center;">7/31/2018</div>
<div class="a" style="left:1120px;top:399px;width:105px;height:17px;background:#ffffff;"></div>
<div class="t" style="top:401.69px;font-size:11px;color:#2a3a50;left:1097.5px;width:150px;text-align:center;">Monthly</div>
<div class="a" style="left:1225px;top:396px;width:83px;height:23px;background:#ecf5fb;"></div>
<div class="a" style="left:1228px;top:399px;width:77px;height:17px;background:#bee3fb;"></div>
<div class="t" style="top:401.69px;font-size:11px;color:#2a3a50;left:1191.5px;width:150px;text-align:center;">Active</div>
<div class="a" style="left:1305px;top:396px;width:88px;height:23px;background:#ecf5fb;"></div>
<div class="a" style="left:1308px;top:399px;width:82px;height:17px;background:#bee3fb;"></div>
<div class="a" style="left:1393px;top:399px;width:78px;height:17px;background:#ffffff;"></div>
<div class="t" style="top:401.69px;font-size:11px;color:#333333;left:1316px;width:150px;text-align:right;">15,000.00</div>
<div class="a" style="left:1474px;top:399px;width:107px;height:17px;background:#ffffff;"></div>
<div class="a" style="left:1581px;top:396px;width:78px;height:23px;background:#ecf5fb;"></div>
<div class="a" style="left:1584px;top:399px;width:72px;height:17px;background:#bee3fb;"></div>
<div class="a" style="left:1656px;top:396px;width:85px;height:23px;background:#ecf5fb;"></div>
<div class="a" style="left:1659px;top:399px;width:79px;height:17px;background:#bee3fb;"></div>
<div class="a" style="left:1760px;top:399px;width:65px;height:17px;background:#ffffff;"></div>
<div class="t" style="top:401.69px;font-size:11px;color:#333333;left:1720px;width:100px;text-align:right;">-</div>
<div class="a" style="left:1828px;top:399px;width:65px;height:17px;background:#ffffff;"></div>
<div class="t" style="top:401.69px;font-size:11px;color:#333333;left:1788px;width:100px;text-align:right;">-</div>
<div class="t" style="top:421.69px;font-size:11px;color:#c0c0c0;letter-spacing:0.2px;left:33px;">D10 (Sales &amp; Services)</div>
<div class="t" style="top:421.69px;font-size:11px;color:#404040;letter-spacing:0.2px;left:195px;width:164px;overflow:hidden;">C524 (California Audio Technolo</div>
<div class="t" style="top:421.69px;font-size:11px;color:#404040;letter-spacing:0.2px;left:371px;">CON-00871</div>
<div class="a" style="left:21px;top:437px;width:450px;height:1px;background:#d4d4d4;"></div>
<div class="a" style="left:491px;top:419px;width:103px;height:17px;background:#ffffff;"></div>
<div class="t" style="top:421.69px;font-size:11px;color:#2a3a50;left:467.5px;width:150px;text-align:center;">Renewal</div>
<div class="a" style="left:597px;top:419px;width:76px;height:17px;background:#ffffff;"></div>
<div class="t" style="top:421.69px;font-size:11px;color:#333333;left:518px;width:150px;text-align:right;">12,200</div>
<div class="a" style="left:676px;top:419px;width:107px;height:17px;background:#ffffff;"></div>
<div class="t" style="top:421.69px;font-size:11px;color:#2a3a50;left:654.5px;width:150px;text-align:center;">Frank Cornish</div>
<div class="a" style="left:786px;top:419px;width:85px;height:17px;background:#ffffff;"></div>
<div class="t" style="top:421.69px;font-size:11px;color:#2a3a50;left:753.5px;width:150px;text-align:center;">CSM</div>
<div class="a" style="left:874px;top:419px;width:79px;height:17px;background:#ffffff;"></div>
<div class="t" style="top:421.69px;font-size:11px;color:#2a3a50;left:838.5px;width:150px;text-align:center;">12/23/2016</div>
<div class="a" style="left:956px;top:419px;width:79px;height:17px;background:#ffffff;"></div>
<div class="t" style="top:421.69px;font-size:11px;color:#2a3a50;left:920.5px;width:150px;text-align:center;">1/13/2017</div>
<div class="a" style="left:1038px;top:419px;width:79px;height:17px;background:#ffffff;"></div>
<div class="t" style="top:421.69px;font-size:11px;color:#2a3a50;left:1002.5px;width:150px;text-align:center;">9/30/2019</div>
<div class="a" style="left:1120px;top:419px;width:105px;height:17px;background:#ffffff;"></div>
<div class="t" style="top:421.69px;font-size:11px;color:#2a3a50;left:1097.5px;width:150px;text-align:center;">Annual</div>
<div class="a" style="left:1225px;top:416px;width:83px;height:23px;background:#ecf5fb;"></div>
<div class="a" style="left:1228px;top:419px;width:77px;height:17px;background:#bee3fb;"></div>
<div class="t" style="top:421.69px;font-size:11px;color:#2a3a50;left:1191.5px;width:150px;text-align:center;">Active</div>
<div class="a" style="left:1305px;top:416px;width:88px;height:23px;background:#ecf5fb;"></div>
<div class="a" style="left:1308px;top:419px;width:82px;height:17px;background:#bee3fb;"></div>
<div class="a" style="left:1393px;top:419px;width:78px;height:17px;background:#ffffff;"></div>
<div class="t" style="top:421.69px;font-size:11px;color:#333333;left:1316px;width:150px;text-align:right;">12,200.00</div>
<div class="a" style="left:1474px;top:419px;width:107px;height:17px;background:#ffffff;"></div>
<div class="a" style="left:1581px;top:416px;width:78px;height:23px;background:#ecf5fb;"></div>
<div class="a" style="left:1584px;top:419px;width:72px;height:17px;background:#bee3fb;"></div>
<div class="a" style="left:1656px;top:416px;width:85px;height:23px;background:#ecf5fb;"></div>
<div class="a" style="left:1659px;top:419px;width:79px;height:17px;background:#bee3fb;"></div>
<div class="a" style="left:1760px;top:419px;width:65px;height:17px;background:#ffffff;"></div>
<div class="t" style="top:421.69px;font-size:11px;color:#333333;left:1720px;width:100px;text-align:right;">1,017</div>
<div class="a" style="left:1828px;top:419px;width:65px;height:17px;background:#ffffff;"></div>
<div class="t" style="top:421.69px;font-size:11px;color:#333333;left:1788px;width:100px;text-align:right;">1,017</div>
<div class="t" style="top:441.69px;font-size:11px;color:#c0c0c0;letter-spacing:0.2px;left:33px;">D10 (Sales &amp; Services)</div>
<div class="t" style="top:441.69px;font-size:11px;color:#404040;letter-spacing:0.2px;left:195px;width:164px;overflow:hidden;">C526 (Dynic USA Corp.)</div>
<div class="t" style="top:441.69px;font-size:11px;color:#404040;letter-spacing:0.2px;left:371px;">CON-00168</div>
<div class="a" style="left:21px;top:457px;width:450px;height:1px;background:#d4d4d4;"></div>
<div class="a" style="left:491px;top:439px;width:103px;height:17px;background:#ffffff;"></div>
<div class="t" style="top:441.69px;font-size:11px;color:#2a3a50;left:467.5px;width:150px;text-align:center;">New</div>
<div class="a" style="left:597px;top:439px;width:76px;height:17px;background:#ffffff;"></div>
<div class="t" style="top:441.69px;font-size:11px;color:#333333;left:518px;width:150px;text-align:right;">22,000</div>
<div class="a" style="left:676px;top:439px;width:107px;height:17px;background:#ffffff;"></div>
<div class="t" style="top:441.69px;font-size:11px;color:#2a3a50;left:654.5px;width:150px;text-align:center;">Joshua Hardacre</div>
<div class="a" style="left:786px;top:439px;width:85px;height:17px;background:#ffffff;"></div>
<div class="t" style="top:441.69px;font-size:11px;color:#2a3a50;left:753.5px;width:150px;text-align:center;">Client Sales</div>
<div class="a" style="left:874px;top:439px;width:79px;height:17px;background:#ffffff;"></div>
<div class="t" style="top:441.69px;font-size:11px;color:#2a3a50;left:838.5px;width:150px;text-align:center;">11/29/2016</div>
<div class="a" style="left:956px;top:439px;width:79px;height:17px;background:#ffffff;"></div>
<div class="t" style="top:441.69px;font-size:11px;color:#2a3a50;left:920.5px;width:150px;text-align:center;">1/3/2017</div>
<div class="a" style="left:1038px;top:439px;width:79px;height:17px;background:#ffffff;"></div>
<div class="t" style="top:441.69px;font-size:11px;color:#2a3a50;left:1002.5px;width:150px;text-align:center;">8/31/2017</div>
<div class="a" style="left:1120px;top:439px;width:105px;height:17px;background:#ffffff;"></div>
<div class="t" style="top:441.69px;font-size:11px;color:#2a3a50;left:1097.5px;width:150px;text-align:center;">Monthly</div>
<div class="a" style="left:1225px;top:436px;width:83px;height:23px;background:#ecf5fb;"></div>
<div class="a" style="left:1228px;top:439px;width:77px;height:17px;background:#bee3fb;"></div>
<div class="t" style="top:441.69px;font-size:11px;color:#2a3a50;left:1191.5px;width:150px;text-align:center;">Active</div>
<div class="a" style="left:1305px;top:436px;width:88px;height:23px;background:#ecf5fb;"></div>
<div class="a" style="left:1308px;top:439px;width:82px;height:17px;background:#bee3fb;"></div>
<div class="a" style="left:1393px;top:439px;width:78px;height:17px;background:#ffffff;"></div>
<div class="t" style="top:441.69px;font-size:11px;color:#333333;left:1316px;width:150px;text-align:right;">22,000.00</div>
<div class="a" style="left:1474px;top:439px;width:107px;height:17px;background:#ffffff;"></div>
<div class="a" style="left:1581px;top:436px;width:78px;height:23px;background:#ecf5fb;"></div>
<div class="a" style="left:1584px;top:439px;width:72px;height:17px;background:#bee3fb;"></div>
<div class="a" style="left:1656px;top:436px;width:85px;height:23px;background:#ecf5fb;"></div>
<div class="a" style="left:1659px;top:439px;width:79px;height:17px;background:#bee3fb;"></div>
<div class="a" style="left:1760px;top:439px;width:65px;height:17px;background:#ffffff;"></div>
<div class="t" style="top:441.69px;font-size:11px;color:#333333;left:1720px;width:100px;text-align:right;">-</div>
<div class="a" style="left:1828px;top:439px;width:65px;height:17px;background:#ffffff;"></div>
<div class="t" style="top:441.69px;font-size:11px;color:#333333;left:1788px;width:100px;text-align:right;">-</div>
<div class="t" style="top:461.69px;font-size:11px;color:#c0c0c0;letter-spacing:0.2px;left:33px;">D10 (Sales &amp; Services)</div>
<div class="t" style="top:461.69px;font-size:11px;color:#404040;letter-spacing:0.2px;left:195px;width:164px;overflow:hidden;">C527 (Illinois Tool Works Inc.)</div>
<div class="t" style="top:461.69px;font-size:11px;color:#404040;letter-spacing:0.2px;left:371px;">CON-00790</div>
<div class="a" style="left:21px;top:477px;width:450px;height:1px;background:#d4d4d4;"></div>
<div class="a" style="left:491px;top:459px;width:103px;height:17px;background:#ffffff;"></div>
<div class="t" style="top:461.69px;font-size:11px;color:#2a3a50;left:467.5px;width:150px;text-align:center;">New</div>
<div class="a" style="left:597px;top:459px;width:76px;height:17px;background:#ffffff;"></div>
<div class="t" style="top:461.69px;font-size:11px;color:#333333;left:518px;width:150px;text-align:right;">122,000</div>
<div class="a" style="left:676px;top:459px;width:107px;height:17px;background:#ffffff;"></div>
<div class="t" style="top:461.69px;font-size:11px;color:#2a3a50;left:654.5px;width:150px;text-align:center;">Dan Davies</div>
<div class="a" style="left:786px;top:459px;width:85px;height:17px;background:#ffffff;"></div>
<div class="t" style="top:461.69px;font-size:11px;color:#2a3a50;left:753.5px;width:150px;text-align:center;">Enterprise</div>
<div class="a" style="left:874px;top:459px;width:79px;height:17px;background:#ffffff;"></div>
<div class="t" style="top:461.69px;font-size:11px;color:#2a3a50;left:838.5px;width:150px;text-align:center;">2/26/2017</div>
<div class="a" style="left:956px;top:459px;width:79px;height:17px;background:#ffffff;"></div>
<div class="t" style="top:461.69px;font-size:11px;color:#2a3a50;left:920.5px;width:150px;text-align:center;">3/26/2017</div>
<div class="a" style="left:1038px;top:459px;width:79px;height:17px;background:#ffffff;"></div>
<div class="t" style="top:461.69px;font-size:11px;color:#2a3a50;left:1002.5px;width:150px;text-align:center;">5/31/2018</div>
<div class="a" style="left:1120px;top:459px;width:105px;height:17px;background:#ffffff;"></div>
<div class="t" style="top:461.69px;font-size:11px;color:#2a3a50;left:1097.5px;width:150px;text-align:center;">Quarterly</div>
<div class="a" style="left:1225px;top:456px;width:83px;height:23px;background:#ecf5fb;"></div>
<div class="a" style="left:1228px;top:459px;width:77px;height:17px;background:#bee3fb;"></div>
<div class="t" style="top:461.69px;font-size:11px;color:#2a3a50;left:1191.5px;width:150px;text-align:center;">Active</div>
<div class="a" style="left:1305px;top:456px;width:88px;height:23px;background:#ecf5fb;"></div>
<div class="a" style="left:1308px;top:459px;width:82px;height:17px;background:#bee3fb;"></div>
<div class="t" style="top:461.69px;font-size:11px;color:#2a3a50;left:1274.0px;width:150px;text-align:center;">Y</div>
<div class="a" style="left:1393px;top:459px;width:78px;height:17px;background:#ffffff;"></div>
<div class="t" style="top:461.69px;font-size:11px;color:#333333;left:1316px;width:150px;text-align:right;">122,000.00</div>
<div class="a" style="left:1474px;top:459px;width:107px;height:17px;background:#ffffff;"></div>
<div class="a" style="left:1581px;top:456px;width:78px;height:23px;background:#ecf5fb;"></div>
<div class="a" style="left:1584px;top:459px;width:72px;height:17px;background:#bee3fb;"></div>
<div class="t" style="top:461.69px;font-size:11px;color:#2a3a50;left:1545.0px;width:150px;text-align:center;">Med</div>
<div class="a" style="left:1656px;top:456px;width:85px;height:23px;background:#ecf5fb;"></div>
<div class="a" style="left:1659px;top:459px;width:79px;height:17px;background:#bee3fb;"></div>
<div class="a" style="left:1760px;top:459px;width:65px;height:17px;background:#ffffff;"></div>
<div class="t" style="top:461.69px;font-size:11px;color:#333333;left:1720px;width:100px;text-align:right;">10,167</div>
<div class="a" style="left:1828px;top:459px;width:65px;height:17px;background:#ffffff;"></div>
<div class="t" style="top:461.69px;font-size:11px;color:#333333;left:1788px;width:100px;text-align:right;">10,167</div>
<div class="t" style="top:481.69px;font-size:11px;color:#c0c0c0;letter-spacing:0.2px;left:33px;">D10 (Sales &amp; Services)</div>
<div class="t" style="top:481.69px;font-size:11px;color:#404040;letter-spacing:0.2px;left:195px;width:164px;overflow:hidden;">C528 (Fines Liquidation Service</div>
<div class="t" style="top:481.69px;font-size:11px;color:#404040;letter-spacing:0.2px;left:371px;">CON-00106</div>
<div class="a" style="left:21px;top:497px;width:450px;height:1px;background:#d4d4d4;"></div>
<div class="a" style="left:491px;top:479px;width:103px;height:17px;background:#ffffff;"></div>
<div class="t" style="top:481.69px;font-size:11px;color:#2a3a50;left:467.5px;width:150px;text-align:center;">Expansion</div>
<div class="a" style="left:597px;top:479px;width:76px;height:17px;background:#ffffff;"></div>
<div class="t" style="top:481.69px;font-size:11px;color:#333333;left:518px;width:150px;text-align:right;">33,400</div>
<div class="a" style="left:676px;top:479px;width:107px;height:17px;background:#ffffff;"></div>
<div class="t" style="top:481.69px;font-size:11px;color:#2a3a50;left:654.5px;width:150px;text-align:center;">Maria Cameron</div>
<div class="a" style="left:786px;top:479px;width:85px;height:17px;background:#ffffff;"></div>
<div class="t" style="top:481.69px;font-size:11px;color:#2a3a50;left:753.5px;width:150px;text-align:center;">CSM</div>
<div class="a" style="left:874px;top:479px;width:79px;height:17px;background:#ffffff;"></div>
<div class="t" style="top:481.69px;font-size:11px;color:#2a3a50;left:838.5px;width:150px;text-align:center;">7/7/2017</div>
<div class="a" style="left:956px;top:479px;width:79px;height:17px;background:#ffffff;"></div>
<div class="t" style="top:481.69px;font-size:11px;color:#2a3a50;left:920.5px;width:150px;text-align:center;">7/24/2017</div>
<div class="a" style="left:1038px;top:479px;width:79px;height:17px;background:#ffffff;"></div>
<div class="t" style="top:481.69px;font-size:11px;color:#2a3a50;left:1002.5px;width:150px;text-align:center;">7/31/2019</div>
<div class="a" style="left:1120px;top:479px;width:105px;height:17px;background:#ffffff;"></div>
<div class="t" style="top:481.69px;font-size:11px;color:#2a3a50;left:1097.5px;width:150px;text-align:center;">Annual</div>
<div class="a" style="left:1225px;top:476px;width:83px;height:23px;background:#ecf5fb;"></div>
<div class="a" style="left:1228px;top:479px;width:77px;height:17px;background:#bee3fb;"></div>
<div class="t" style="top:481.69px;font-size:11px;color:#2a3a50;left:1191.5px;width:150px;text-align:center;">Active</div>
<div class="a" style="left:1305px;top:476px;width:88px;height:23px;background:#ecf5fb;"></div>
<div class="a" style="left:1308px;top:479px;width:82px;height:17px;background:#bee3fb;"></div>
<div class="a" style="left:1393px;top:479px;width:78px;height:17px;background:#ffffff;"></div>
<div class="t" style="top:481.69px;font-size:11px;color:#333333;left:1316px;width:150px;text-align:right;">33,400.00</div>
<div class="a" style="left:1474px;top:479px;width:107px;height:17px;background:#ffffff;"></div>
<div class="a" style="left:1581px;top:476px;width:78px;height:23px;background:#ecf5fb;"></div>
<div class="a" style="left:1584px;top:479px;width:72px;height:17px;background:#bee3fb;"></div>
<div class="t" style="top:481.69px;font-size:11px;color:#2a3a50;left:1545.0px;width:150px;text-align:center;">Med</div>
<div class="a" style="left:1656px;top:476px;width:85px;height:23px;background:#ecf5fb;"></div>
<div class="a" style="left:1659px;top:479px;width:79px;height:17px;background:#bee3fb;"></div>
<div class="a" style="left:1760px;top:479px;width:65px;height:17px;background:#ffffff;"></div>
<div class="t" style="top:481.69px;font-size:11px;color:#333333;left:1720px;width:100px;text-align:right;">2,783</div>
<div class="a" style="left:1828px;top:479px;width:65px;height:17px;background:#ffffff;"></div>
<div class="t" style="top:481.69px;font-size:11px;color:#333333;left:1788px;width:100px;text-align:right;">2,783</div>
<div class="t" style="top:501.69px;font-size:11px;color:#c0c0c0;letter-spacing:0.2px;left:33px;">D10 (Sales &amp; Services)</div>
<div class="t" style="top:501.69px;font-size:11px;color:#404040;letter-spacing:0.2px;left:195px;width:164px;overflow:hidden;">C530 (Robert A Parkerson)</div>
<div class="t" style="top:501.69px;font-size:11px;color:#404040;letter-spacing:0.2px;left:371px;">CON-00427</div>
<div class="a" style="left:21px;top:517px;width:450px;height:1px;background:#d4d4d4;"></div>
<div class="a" style="left:491px;top:499px;width:103px;height:17px;background:#ffffff;"></div>
<div class="t" style="top:501.69px;font-size:11px;color:#2a3a50;left:467.5px;width:150px;text-align:center;">Renewal</div>
<div class="a" style="left:597px;top:499px;width:76px;height:17px;background:#ffffff;"></div>
<div class="t" style="top:501.69px;font-size:11px;color:#333333;left:518px;width:150px;text-align:right;">16,900</div>
<div class="a" style="left:676px;top:499px;width:107px;height:17px;background:#ffffff;"></div>
<div class="t" style="top:501.69px;font-size:11px;color:#2a3a50;left:654.5px;width:150px;text-align:center;">Brandon MacDonald</div>
<div class="a" style="left:786px;top:499px;width:85px;height:17px;background:#ffffff;"></div>
<div class="t" style="top:501.69px;font-size:11px;color:#2a3a50;left:753.5px;width:150px;text-align:center;">Client Sales</div>
<div class="a" style="left:874px;top:499px;width:79px;height:17px;background:#ffffff;"></div>
<div class="t" style="top:501.69px;font-size:11px;color:#2a3a50;left:838.5px;width:150px;text-align:center;">9/22/2017</div>
<div class="a" style="left:956px;top:499px;width:79px;height:17px;background:#ffffff;"></div>
<div class="t" style="top:501.69px;font-size:11px;color:#2a3a50;left:920.5px;width:150px;text-align:center;">11/1/2017</div>
<div class="a" style="left:1038px;top:499px;width:79px;height:17px;background:#ffffff;"></div>
<div class="t" style="top:501.69px;font-size:11px;color:#2a3a50;left:1002.5px;width:150px;text-align:center;">3/31/2018</div>
<div class="a" style="left:1120px;top:499px;width:105px;height:17px;background:#ffffff;"></div>
<div class="t" style="top:501.69px;font-size:11px;color:#2a3a50;left:1097.5px;width:150px;text-align:center;">Annual</div>
<div class="a" style="left:1225px;top:496px;width:83px;height:23px;background:#ecf5fb;"></div>
<div class="a" style="left:1228px;top:499px;width:77px;height:17px;background:#bee3fb;"></div>
<div class="t" style="top:501.69px;font-size:11px;color:#2a3a50;left:1191.5px;width:150px;text-align:center;">Active</div>
<div class="a" style="left:1305px;top:496px;width:88px;height:23px;background:#ecf5fb;"></div>
<div class="a" style="left:1308px;top:499px;width:82px;height:17px;background:#bee3fb;"></div>
<div class="a" style="left:1393px;top:499px;width:78px;height:17px;background:#ffffff;"></div>
<div class="t" style="top:501.69px;font-size:11px;color:#333333;left:1316px;width:150px;text-align:right;">16,900.00</div>
<div class="a" style="left:1474px;top:499px;width:107px;height:17px;background:#ffffff;"></div>
<div class="a" style="left:1581px;top:496px;width:78px;height:23px;background:#ecf5fb;"></div>
<div class="a" style="left:1584px;top:499px;width:72px;height:17px;background:#bee3fb;"></div>
<div class="a" style="left:1656px;top:496px;width:85px;height:23px;background:#ecf5fb;"></div>
<div class="a" style="left:1659px;top:499px;width:79px;height:17px;background:#bee3fb;"></div>
<div class="a" style="left:1760px;top:499px;width:65px;height:17px;background:#ffffff;"></div>
<div class="t" style="top:501.69px;font-size:11px;color:#333333;left:1720px;width:100px;text-align:right;">-</div>
<div class="a" style="left:1828px;top:499px;width:65px;height:17px;background:#ffffff;"></div>
<div class="t" style="top:501.69px;font-size:11px;color:#333333;left:1788px;width:100px;text-align:right;">-</div>
<div class="t" style="top:541.80px;font-size:21.5px;color:#0e6b3a;font-weight:bold;left:23px;transform:scaleX(0.86);transform-origin:left top;">Churned</div>
<div class="a" style="left:21px;top:563px;width:1876px;height:25px;background:#d9d9d9;"></div>
<div class="t" style="top:570.42px;font-size:12.5px;color:#404040;font-weight:bold;left:27px;transform:scaleX(0.85);transform-origin:left top;">Department</div>
<div class="t" style="top:570.42px;font-size:12.5px;color:#404040;font-weight:bold;left:189px;transform:scaleX(0.85);transform-origin:left top;">Customer</div>
<div class="t" style="top:570.42px;font-size:12.5px;color:#404040;font-weight:bold;left:365px;transform:scaleX(0.85);transform-origin:left top;">Contract</div>
<svg style="left:497px;top:572px" width="6" height="8"><path d="M0 0L6 4L0 8Z" fill="#333"/></svg>
<div class="t" style="top:570.69px;font-size:11px;color:#404040;left:508px;transform:scaleX(0.944);transform-origin:left top;">Details Synced from ERP</div>
<div class="t" style="top:571.69px;font-size:11px;color:#333;font-weight:bold;left:1720px;width:100px;text-align:right;">7,942</div>
<div class="t" style="top:571.69px;font-size:11px;color:#333;font-weight:bold;left:1788px;width:100px;text-align:right;">7,942</div>
<div class="t" style="top:593.69px;font-size:11px;color:#404040;letter-spacing:0.2px;left:33px;">D10 (Sales &amp; Services)</div>
<div class="t" style="top:593.69px;font-size:11px;color:#404040;letter-spacing:0.2px;left:195px;width:164px;overflow:hidden;">C532 (DAS Mfg Inc)</div>
<div class="t" style="top:593.69px;font-size:11px;color:#404040;letter-spacing:0.2px;left:371px;">CON-00269</div>
<div class="a" style="left:21px;top:609px;width:450px;height:1px;background:#d4d4d4;"></div>
<div class="a" style="left:491px;top:591px;width:103px;height:17px;background:#ffffff;"></div>
<div class="t" style="top:593.69px;font-size:11px;color:#2a3a50;left:467.5px;width:150px;text-align:center;">Churn</div>
<div class="a" style="left:597px;top:591px;width:76px;height:17px;background:#ffffff;"></div>
<div class="t" style="top:593.69px;font-size:11px;color:#333333;left:518px;width:150px;text-align:right;">28,200</div>
<div class="a" style="left:676px;top:591px;width:107px;height:17px;background:#ffffff;"></div>
<div class="t" style="top:593.69px;font-size:11px;color:#2a3a50;left:654.5px;width:150px;text-align:center;">Anna Bailey</div>
<div class="a" style="left:786px;top:591px;width:85px;height:17px;background:#ffffff;"></div>
<div class="t" style="top:593.69px;font-size:11px;color:#2a3a50;left:753.5px;width:150px;text-align:center;">Client Sales</div>
<div class="a" style="left:874px;top:591px;width:79px;height:17px;background:#ffffff;"></div>
<div class="t" style="top:593.69px;font-size:11px;color:#2a3a50;left:838.5px;width:150px;text-align:center;">4/8/2017</div>
<div class="a" style="left:956px;top:591px;width:79px;height:17px;background:#ffffff;"></div>
<div class="t" style="top:593.69px;font-size:11px;color:#2a3a50;left:920.5px;width:150px;text-align:center;">4/12/2017</div>
<div class="a" style="left:1038px;top:591px;width:79px;height:17px;background:#ffffff;"></div>
<div class="t" style="top:593.69px;font-size:11px;color:#2a3a50;left:1002.5px;width:150px;text-align:center;">4/30/2019</div>
<div class="a" style="left:1120px;top:591px;width:105px;height:17px;background:#ffffff;"></div>
<div class="t" style="top:593.69px;font-size:11px;color:#2a3a50;left:1097.5px;width:150px;text-align:center;">Monthly</div>
<div class="a" style="left:1225px;top:588px;width:83px;height:23px;background:#ecf5fb;"></div>
<div class="a" style="left:1228px;top:591px;width:77px;height:17px;background:#bee3fb;"></div>
<div class="t" style="top:593.69px;font-size:11px;color:#2a3a50;left:1191.5px;width:150px;text-align:center;">Terminated</div>
<div class="a" style="left:1305px;top:588px;width:88px;height:23px;background:#ecf5fb;"></div>
<div class="a" style="left:1308px;top:591px;width:82px;height:17px;background:#bee3fb;"></div>
<div class="a" style="left:1393px;top:591px;width:78px;height:17px;background:#ffffff;"></div>
<div class="t" style="top:593.69px;font-size:11px;color:#333333;left:1316px;width:150px;text-align:right;">-</div>
<div class="a" style="left:1474px;top:591px;width:107px;height:17px;background:#ffffff;"></div>
<div class="a" style="left:1581px;top:588px;width:78px;height:23px;background:#ecf5fb;"></div>
<div class="a" style="left:1584px;top:591px;width:72px;height:17px;background:#bee3fb;"></div>
<div class="t" style="top:593.69px;font-size:11px;color:#2a3a50;left:1545.0px;width:150px;text-align:center;">High</div>
<div class="a" style="left:1656px;top:588px;width:85px;height:23px;background:#ecf5fb;"></div>
<div class="a" style="left:1659px;top:591px;width:79px;height:17px;background:#bee3fb;"></div>
<div class="t" style="top:593.69px;font-size:11px;color:#2a3a50;left:1623.5px;width:150px;text-align:center;">4/30/2019</div>
<div class="a" style="left:1760px;top:591px;width:65px;height:17px;background:#ffffff;"></div>
<div class="t" style="top:593.69px;font-size:11px;color:#333333;left:1720px;width:100px;text-align:right;">2,350</div>
<div class="a" style="left:1828px;top:591px;width:65px;height:17px;background:#ffffff;"></div>
<div class="t" style="top:593.69px;font-size:11px;color:#333333;left:1788px;width:100px;text-align:right;">2,350</div>
<div class="t" style="top:613.69px;font-size:11px;color:#c0c0c0;letter-spacing:0.2px;left:33px;">D10 (Sales &amp; Services)</div>
<div class="t" style="top:613.69px;font-size:11px;color:#404040;letter-spacing:0.2px;left:195px;width:164px;overflow:hidden;">C534 (Paytraq.com)</div>
<div class="t" style="top:613.69px;font-size:11px;color:#404040;letter-spacing:0.2px;left:371px;">CON-00432</div>
<div class="a" style="left:21px;top:629px;width:450px;height:1px;background:#d4d4d4;"></div>
<div class="a" style="left:491px;top:611px;width:103px;height:17px;background:#ffffff;"></div>
<div class="t" style="top:613.69px;font-size:11px;color:#2a3a50;left:467.5px;width:150px;text-align:center;">Churn</div>
<div class="a" style="left:597px;top:611px;width:76px;height:17px;background:#ffffff;"></div>
<div class="t" style="top:613.69px;font-size:11px;color:#333333;left:518px;width:150px;text-align:right;">13,200</div>
<div class="a" style="left:676px;top:611px;width:107px;height:17px;background:#ffffff;"></div>
<div class="t" style="top:613.69px;font-size:11px;color:#2a3a50;left:654.5px;width:150px;text-align:center;">Megan Thomson</div>
<div class="a" style="left:786px;top:611px;width:85px;height:17px;background:#ffffff;"></div>
<div class="t" style="top:613.69px;font-size:11px;color:#2a3a50;left:753.5px;width:150px;text-align:center;">Client Sales</div>
<div class="a" style="left:874px;top:611px;width:79px;height:17px;background:#ffffff;"></div>
<div class="t" style="top:613.69px;font-size:11px;color:#2a3a50;left:838.5px;width:150px;text-align:center;">9/2/2018</div>
<div class="a" style="left:956px;top:611px;width:79px;height:17px;background:#ffffff;"></div>
<div class="t" style="top:613.69px;font-size:11px;color:#2a3a50;left:920.5px;width:150px;text-align:center;">9/18/2018</div>
<div class="a" style="left:1038px;top:611px;width:79px;height:17px;background:#ffffff;"></div>
<div class="t" style="top:613.69px;font-size:11px;color:#2a3a50;left:1002.5px;width:150px;text-align:center;">8/31/2021</div>
<div class="a" style="left:1120px;top:611px;width:105px;height:17px;background:#ffffff;"></div>
<div class="t" style="top:613.69px;font-size:11px;color:#2a3a50;left:1097.5px;width:150px;text-align:center;">Annual</div>
<div class="a" style="left:1225px;top:608px;width:83px;height:23px;background:#ecf5fb;"></div>
<div class="a" style="left:1228px;top:611px;width:77px;height:17px;background:#bee3fb;"></div>
<div class="t" style="top:613.69px;font-size:11px;color:#2a3a50;left:1191.5px;width:150px;text-align:center;">Expired</div>
<div class="a" style="left:1305px;top:608px;width:88px;height:23px;background:#ecf5fb;"></div>
<div class="a" style="left:1308px;top:611px;width:82px;height:17px;background:#bee3fb;"></div>
<div class="a" style="left:1393px;top:611px;width:78px;height:17px;background:#ffffff;"></div>
<div class="t" style="top:613.69px;font-size:11px;color:#333333;left:1316px;width:150px;text-align:right;">-</div>
<div class="a" style="left:1474px;top:611px;width:107px;height:17px;background:#ffffff;"></div>
<div class="a" style="left:1581px;top:608px;width:78px;height:23px;background:#ecf5fb;"></div>
<div class="a" style="left:1584px;top:611px;width:72px;height:17px;background:#bee3fb;"></div>
<div class="t" style="top:613.69px;font-size:11px;color:#2a3a50;left:1545.0px;width:150px;text-align:center;">Med</div>
<div class="a" style="left:1656px;top:608px;width:85px;height:23px;background:#ecf5fb;"></div>
<div class="a" style="left:1659px;top:611px;width:79px;height:17px;background:#bee3fb;"></div>
<div class="t" style="top:613.69px;font-size:11px;color:#2a3a50;left:1623.5px;width:150px;text-align:center;">8/31/2021</div>
<div class="a" style="left:1760px;top:611px;width:65px;height:17px;background:#ffffff;"></div>
<div class="t" style="top:613.69px;font-size:11px;color:#333333;left:1720px;width:100px;text-align:right;">1,100</div>
<div class="a" style="left:1828px;top:611px;width:65px;height:17px;background:#ffffff;"></div>
<div class="t" style="top:613.69px;font-size:11px;color:#333333;left:1788px;width:100px;text-align:right;">1,100</div>
<div class="t" style="top:633.69px;font-size:11px;color:#c0c0c0;letter-spacing:0.2px;left:33px;">D10 (Sales &amp; Services)</div>
<div class="t" style="top:633.69px;font-size:11px;color:#404040;letter-spacing:0.2px;left:195px;width:164px;overflow:hidden;">C535 (Dillon Energy Svc)</div>
<div class="t" style="top:633.69px;font-size:11px;color:#404040;letter-spacing:0.2px;left:371px;">CON-00108</div>
<div class="a" style="left:21px;top:649px;width:450px;height:1px;background:#d4d4d4;"></div>
<div class="a" style="left:491px;top:631px;width:103px;height:17px;background:#ffffff;"></div>
<div class="t" style="top:633.69px;font-size:11px;color:#2a3a50;left:467.5px;width:150px;text-align:center;">Churn</div>
<div class="a" style="left:597px;top:631px;width:76px;height:17px;background:#ffffff;"></div>
<div class="t" style="top:633.69px;font-size:11px;color:#333333;left:518px;width:150px;text-align:right;">20,000</div>
<div class="a" style="left:676px;top:631px;width:107px;height:17px;background:#ffffff;"></div>
<div class="t" style="top:633.69px;font-size:11px;color:#2a3a50;left:654.5px;width:150px;text-align:center;">Alexander Knox</div>
<div class="a" style="left:786px;top:631px;width:85px;height:17px;background:#ffffff;"></div>
<div class="t" style="top:633.69px;font-size:11px;color:#2a3a50;left:753.5px;width:150px;text-align:center;">VP Growth</div>
<div class="a" style="left:874px;top:631px;width:79px;height:17px;background:#ffffff;"></div>
<div class="t" style="top:633.69px;font-size:11px;color:#2a3a50;left:838.5px;width:150px;text-align:center;">3/29/2018</div>
<div class="a" style="left:956px;top:631px;width:79px;height:17px;background:#ffffff;"></div>
<div class="t" style="top:633.69px;font-size:11px;color:#2a3a50;left:920.5px;width:150px;text-align:center;">4/16/2018</div>
<div class="a" style="left:1038px;top:631px;width:79px;height:17px;background:#ffffff;"></div>
<div class="t" style="top:633.69px;font-size:11px;color:#2a3a50;left:1002.5px;width:150px;text-align:center;">6/30/2020</div>
<div class="a" style="left:1120px;top:631px;width:105px;height:17px;background:#ffffff;"></div>
<div class="t" style="top:633.69px;font-size:11px;color:#2a3a50;left:1097.5px;width:150px;text-align:center;">Quarterly</div>
<div class="a" style="left:1225px;top:628px;width:83px;height:23px;background:#ecf5fb;"></div>
<div class="a" style="left:1228px;top:631px;width:77px;height:17px;background:#bee3fb;"></div>
<div class="t" style="top:633.69px;font-size:11px;color:#2a3a50;left:1191.5px;width:150px;text-align:center;">Terminated</div>
<div class="a" style="left:1305px;top:628px;width:88px;height:23px;background:#ecf5fb;"></div>
<div class="a" style="left:1308px;top:631px;width:82px;height:17px;background:#bee3fb;"></div>
<div class="a" style="left:1393px;top:631px;width:78px;height:17px;background:#ffffff;"></div>
<div class="t" style="top:633.69px;font-size:11px;color:#333333;left:1316px;width:150px;text-align:right;">-</div>
<div class="a" style="left:1474px;top:631px;width:107px;height:17px;background:#ffffff;"></div>
<div class="a" style="left:1581px;top:628px;width:78px;height:23px;background:#ecf5fb;"></div>
<div class="a" style="left:1584px;top:631px;width:72px;height:17px;background:#bee3fb;"></div>
<div class="t" style="top:633.69px;font-size:11px;color:#2a3a50;left:1545.0px;width:150px;text-align:center;">Med</div>
<div class="a" style="left:1656px;top:628px;width:85px;height:23px;background:#ecf5fb;"></div>
<div class="a" style="left:1659px;top:631px;width:79px;height:17px;background:#bee3fb;"></div>
<div class="t" style="top:633.69px;font-size:11px;color:#2a3a50;left:1623.5px;width:150px;text-align:center;">6/30/2020</div>
<div class="a" style="left:1760px;top:631px;width:65px;height:17px;background:#ffffff;"></div>
<div class="t" style="top:633.69px;font-size:11px;color:#333333;left:1720px;width:100px;text-align:right;">1,667</div>
<div class="a" style="left:1828px;top:631px;width:65px;height:17px;background:#ffffff;"></div>
<div class="t" style="top:633.69px;font-size:11px;color:#333333;left:1788px;width:100px;text-align:right;">1,667</div>
<div class="t" style="top:673.38px;font-size:22px;color:#3a4fa8;font-weight:bold;left:23px;transform:scaleX(0.84);transform-origin:left top;">Future</div>
<div class="a" style="left:21px;top:695px;width:1876px;height:25px;background:#d9d9d9;"></div>
<div class="t" style="top:702.42px;font-size:12.5px;color:#404040;font-weight:bold;left:27px;transform:scaleX(0.85);transform-origin:left top;">Department</div>
<div class="t" style="top:702.42px;font-size:12.5px;color:#404040;font-weight:bold;left:189px;transform:scaleX(0.85);transform-origin:left top;">Customer</div>
<div class="t" style="top:702.42px;font-size:12.5px;color:#404040;font-weight:bold;left:365px;transform:scaleX(0.85);transform-origin:left top;">Placeholder</div>
<svg style="left:497px;top:704px" width="6" height="8"><path d="M0 0L6 4L0 8Z" fill="#333"/></svg>
<div class="t" style="top:702.69px;font-size:11px;color:#404040;left:508px;transform:scaleX(0.944);transform-origin:left top;">Enter Details</div>
<div class="t" style="top:703.69px;font-size:11px;color:#333;font-weight:bold;left:1720px;width:100px;text-align:right;">-</div>
<div class="t" style="top:703.69px;font-size:11px;color:#333;font-weight:bold;left:1788px;width:100px;text-align:right;">-</div>
<div class="t" style="top:725.69px;font-size:11px;color:#404040;letter-spacing:0.2px;left:33px;">D10 (Sales &amp; Services)</div>
<div class="t" style="top:725.69px;font-size:11px;color:#404040;letter-spacing:0.2px;left:195px;width:164px;overflow:hidden;">C511 (Infonomics LLC)</div>
<div class="t" style="top:725.69px;font-size:11px;color:#404040;letter-spacing:0.2px;left:371px;">Planned 01</div>
<div class="a" style="left:21px;top:741px;width:450px;height:1px;background:#d4d4d4;"></div>
<div class="a" style="left:488px;top:720px;width:109px;height:23px;background:#ecf5fb;"></div>
<div class="a" style="left:491px;top:723px;width:103px;height:17px;background:#bee3fb;"></div>
<div class="t" style="top:725.69px;font-size:11px;color:#2a3a50;left:467.5px;width:150px;text-align:center;">Expansion</div>
<div class="a" style="left:594px;top:720px;width:82px;height:23px;background:#ecf5fb;"></div>
<div class="a" style="left:597px;top:723px;width:76px;height:17px;background:#bee3fb;"></div>
<div class="t" style="top:725.69px;font-size:11px;color:#333333;left:518px;width:150px;text-align:right;">10,500</div>
<div class="a" style="left:673px;top:720px;width:113px;height:23px;background:#ecf5fb;"></div>
<div class="a" style="left:676px;top:723px;width:107px;height:17px;background:#bee3fb;"></div>
<div class="t" style="top:725.69px;font-size:11px;color:#2a3a50;left:654.5px;width:150px;text-align:center;">Jason Hodges</div>
<div class="a" style="left:783px;top:720px;width:91px;height:23px;background:#ecf5fb;"></div>
<div class="a" style="left:786px;top:723px;width:85px;height:17px;background:#bee3fb;"></div>
<div class="t" style="top:725.69px;font-size:11px;color:#2a3a50;left:753.5px;width:150px;text-align:center;">VP Growth</div>
<div class="a" style="left:871px;top:720px;width:85px;height:23px;background:#ecf5fb;"></div>
<div class="a" style="left:874px;top:723px;width:79px;height:17px;background:#bee3fb;"></div>
<div class="t" style="top:725.69px;font-size:11px;color:#2a3a50;left:838.5px;width:150px;text-align:center;">5/13/2017</div>
<div class="a" style="left:953px;top:720px;width:85px;height:23px;background:#ecf5fb;"></div>
<div class="a" style="left:956px;top:723px;width:79px;height:17px;background:#bee3fb;"></div>
<div class="t" style="top:725.69px;font-size:11px;color:#2a3a50;left:920.5px;width:150px;text-align:center;">6/16/2017</div>
<div class="a" style="left:1035px;top:720px;width:85px;height:23px;background:#ecf5fb;"></div>
<div class="a" style="left:1038px;top:723px;width:79px;height:17px;background:#bee3fb;"></div>
<div class="t" style="top:725.69px;font-size:11px;color:#2a3a50;left:1002.5px;width:150px;text-align:center;">5/31/2018</div>
<div class="a" style="left:1117px;top:720px;width:111px;height:23px;background:#ecf5fb;"></div>
<div class="a" style="left:1120px;top:723px;width:105px;height:17px;background:#bee3fb;"></div>
<div class="t" style="top:725.69px;font-size:11px;color:#2a3a50;left:1097.5px;width:150px;text-align:center;">Annual</div>
<div class="a" style="left:1225px;top:720px;width:83px;height:23px;background:#ecf5fb;"></div>
<div class="a" style="left:1228px;top:723px;width:77px;height:17px;background:#bee3fb;"></div>
<div class="t" style="top:725.69px;font-size:11px;color:#2a3a50;left:1191.5px;width:150px;text-align:center;">Active</div>
<div class="a" style="left:1305px;top:720px;width:88px;height:23px;background:#ecf5fb;"></div>
<div class="a" style="left:1308px;top:723px;width:82px;height:17px;background:#bee3fb;"></div>
<div class="a" style="left:1393px;top:723px;width:78px;height:17px;background:#ffffff;"></div>
<div class="t" style="top:725.69px;font-size:11px;color:#333333;left:1316px;width:150px;text-align:right;">-</div>
<div class="a" style="left:1471px;top:720px;width:113px;height:23px;background:#ecf5fb;"></div>
<div class="a" style="left:1474px;top:723px;width:107px;height:17px;background:#bee3fb;"></div>
<div class="a" style="left:1581px;top:720px;width:78px;height:23px;background:#ecf5fb;"></div>
<div class="a" style="left:1584px;top:723px;width:72px;height:17px;background:#bee3fb;"></div>
<div class="a" style="left:1656px;top:720px;width:85px;height:23px;background:#ecf5fb;"></div>
<div class="a" style="left:1659px;top:723px;width:79px;height:17px;background:#bee3fb;"></div>
<div class="a" style="left:1760px;top:723px;width:65px;height:17px;background:#ffffff;"></div>
<div class="t" style="top:725.69px;font-size:11px;color:#333333;left:1720px;width:100px;text-align:right;">-</div>
<div class="a" style="left:1828px;top:723px;width:65px;height:17px;background:#ffffff;"></div>
<div class="t" style="top:725.69px;font-size:11px;color:#333333;left:1788px;width:100px;text-align:right;">-</div>
<div class="t" style="top:745.69px;font-size:11px;color:#c0c0c0;letter-spacing:0.2px;left:33px;">D10 (Sales &amp; Services)</div>
<div class="t" style="top:745.69px;font-size:11px;color:#404040;letter-spacing:0.2px;left:195px;width:164px;overflow:hidden;">C513 (Halsted Communications</div>
<div class="t" style="top:745.69px;font-size:11px;color:#404040;letter-spacing:0.2px;left:371px;">Planned 02</div>
<div class="a" style="left:21px;top:761px;width:450px;height:1px;background:#d4d4d4;"></div>
<div class="a" style="left:488px;top:740px;width:109px;height:23px;background:#ecf5fb;"></div>
<div class="a" style="left:491px;top:743px;width:103px;height:17px;background:#bee3fb;"></div>
<div class="t" style="top:745.69px;font-size:11px;color:#2a3a50;left:467.5px;width:150px;text-align:center;">New</div>
<div class="a" style="left:594px;top:740px;width:82px;height:23px;background:#ecf5fb;"></div>
<div class="a" style="left:597px;top:743px;width:76px;height:17px;background:#bee3fb;"></div>
<div class="t" style="top:745.69px;font-size:11px;color:#333333;left:518px;width:150px;text-align:right;">33,900</div>
<div class="a" style="left:673px;top:740px;width:113px;height:23px;background:#ecf5fb;"></div>
<div class="a" style="left:676px;top:743px;width:107px;height:17px;background:#bee3fb;"></div>
<div class="t" style="top:745.69px;font-size:11px;color:#2a3a50;left:654.5px;width:150px;text-align:center;">Anne Ince</div>
<div class="a" style="left:783px;top:740px;width:91px;height:23px;background:#ecf5fb;"></div>
<div class="a" style="left:786px;top:743px;width:85px;height:17px;background:#bee3fb;"></div>
<div class="t" style="top:745.69px;font-size:11px;color:#2a3a50;left:753.5px;width:150px;text-align:center;">CSM</div>
<div class="a" style="left:871px;top:740px;width:85px;height:23px;background:#ecf5fb;"></div>
<div class="a" style="left:874px;top:743px;width:79px;height:17px;background:#bee3fb;"></div>
<div class="t" style="top:745.69px;font-size:11px;color:#2a3a50;left:838.5px;width:150px;text-align:center;">1/9/2017</div>
<div class="a" style="left:953px;top:740px;width:85px;height:23px;background:#ecf5fb;"></div>
<div class="a" style="left:956px;top:743px;width:79px;height:17px;background:#bee3fb;"></div>
<div class="t" style="top:745.69px;font-size:11px;color:#2a3a50;left:920.5px;width:150px;text-align:center;">1/19/2017</div>
<div class="a" style="left:1035px;top:740px;width:85px;height:23px;background:#ecf5fb;"></div>
<div class="a" style="left:1038px;top:743px;width:79px;height:17px;background:#bee3fb;"></div>
<div class="t" style="top:745.69px;font-size:11px;color:#2a3a50;left:1002.5px;width:150px;text-align:center;">1/31/2020</div>
<div class="a" style="left:1117px;top:740px;width:111px;height:23px;background:#ecf5fb;"></div>
<div class="a" style="left:1120px;top:743px;width:105px;height:17px;background:#bee3fb;"></div>
<div class="t" style="top:745.69px;font-size:11px;color:#2a3a50;left:1097.5px;width:150px;text-align:center;">Monthly</div>
<div class="a" style="left:1225px;top:740px;width:83px;height:23px;background:#ecf5fb;"></div>
<div class="a" style="left:1228px;top:743px;width:77px;height:17px;background:#bee3fb;"></div>
<div class="t" style="top:745.69px;font-size:11px;color:#2a3a50;left:1191.5px;width:150px;text-align:center;">Active</div>
<div class="a" style="left:1305px;top:740px;width:88px;height:23px;background:#ecf5fb;"></div>
<div class="a" style="left:1308px;top:743px;width:82px;height:17px;background:#bee3fb;"></div>
<div class="a" style="left:1393px;top:743px;width:78px;height:17px;background:#ffffff;"></div>
<div class="t" style="top:745.69px;font-size:11px;color:#333333;left:1316px;width:150px;text-align:right;">-</div>
<div class="a" style="left:1471px;top:740px;width:113px;height:23px;background:#ecf5fb;"></div>
<div class="a" style="left:1474px;top:743px;width:107px;height:17px;background:#bee3fb;"></div>
<div class="a" style="left:1581px;top:740px;width:78px;height:23px;background:#ecf5fb;"></div>
<div class="a" style="left:1584px;top:743px;width:72px;height:17px;background:#bee3fb;"></div>
<div class="a" style="left:1656px;top:740px;width:85px;height:23px;background:#ecf5fb;"></div>
<div class="a" style="left:1659px;top:743px;width:79px;height:17px;background:#bee3fb;"></div>
<div class="a" style="left:1760px;top:743px;width:65px;height:17px;background:#ffffff;"></div>
<div class="t" style="top:745.69px;font-size:11px;color:#333333;left:1720px;width:100px;text-align:right;">2,825</div>
<div class="a" style="left:1828px;top:743px;width:65px;height:17px;background:#ffffff;"></div>
<div class="t" style="top:745.69px;font-size:11px;color:#333333;left:1788px;width:100px;text-align:right;">2,825</div>
<div class="t" style="top:765.69px;font-size:11px;color:#c0c0c0;letter-spacing:0.2px;left:33px;">D10 (Sales &amp; Services)</div>
<div class="t" style="top:765.69px;font-size:11px;color:#404040;letter-spacing:0.2px;left:195px;width:164px;overflow:hidden;">C531 (Michael Millerd)</div>
<div class="t" style="top:765.69px;font-size:11px;color:#404040;letter-spacing:0.2px;left:371px;">Planned 03</div>
<div class="a" style="left:21px;top:781px;width:450px;height:1px;background:#d4d4d4;"></div>
<div class="a" style="left:488px;top:760px;width:109px;height:23px;background:#ecf5fb;"></div>
<div class="a" style="left:491px;top:763px;width:103px;height:17px;background:#bee3fb;"></div>
<div class="t" style="top:765.69px;font-size:11px;color:#2a3a50;left:467.5px;width:150px;text-align:center;">Renewal</div>
<div class="a" style="left:594px;top:760px;width:82px;height:23px;background:#ecf5fb;"></div>
<div class="a" style="left:597px;top:763px;width:76px;height:17px;background:#bee3fb;"></div>
<div class="t" style="top:765.69px;font-size:11px;color:#333333;left:518px;width:150px;text-align:right;">33,000</div>
<div class="a" style="left:673px;top:760px;width:113px;height:23px;background:#ecf5fb;"></div>
<div class="a" style="left:676px;top:763px;width:107px;height:17px;background:#bee3fb;"></div>
<div class="t" style="top:765.69px;font-size:11px;color:#2a3a50;left:654.5px;width:150px;text-align:center;">Austin Welch</div>
<div class="a" style="left:783px;top:760px;width:91px;height:23px;background:#ecf5fb;"></div>
<div class="a" style="left:786px;top:763px;width:85px;height:17px;background:#bee3fb;"></div>
<div class="t" style="top:765.69px;font-size:11px;color:#2a3a50;left:753.5px;width:150px;text-align:center;">CSM</div>
<div class="a" style="left:871px;top:760px;width:85px;height:23px;background:#ecf5fb;"></div>
<div class="a" style="left:874px;top:763px;width:79px;height:17px;background:#bee3fb;"></div>
<div class="t" style="top:765.69px;font-size:11px;color:#2a3a50;left:838.5px;width:150px;text-align:center;">12/14/2016</div>
<div class="a" style="left:953px;top:760px;width:85px;height:23px;background:#ecf5fb;"></div>
<div class="a" style="left:956px;top:763px;width:79px;height:17px;background:#bee3fb;"></div>
<div class="t" style="top:765.69px;font-size:11px;color:#2a3a50;left:920.5px;width:150px;text-align:center;">12/28/2016</div>
<div class="a" style="left:1035px;top:760px;width:85px;height:23px;background:#ecf5fb;"></div>
<div class="a" style="left:1038px;top:763px;width:79px;height:17px;background:#bee3fb;"></div>
<div class="t" style="top:765.69px;font-size:11px;color:#2a3a50;left:1002.5px;width:150px;text-align:center;">5/31/2017</div>
<div class="a" style="left:1117px;top:760px;width:111px;height:23px;background:#ecf5fb;"></div>
<div class="a" style="left:1120px;top:763px;width:105px;height:17px;background:#bee3fb;"></div>
<div class="t" style="top:765.69px;font-size:11px;color:#2a3a50;left:1097.5px;width:150px;text-align:center;">Monthly</div>
<div class="a" style="left:1225px;top:760px;width:83px;height:23px;background:#ecf5fb;"></div>
<div class="a" style="left:1228px;top:763px;width:77px;height:17px;background:#bee3fb;"></div>
<div class="t" style="top:765.69px;font-size:11px;color:#2a3a50;left:1191.5px;width:150px;text-align:center;">Active</div>
<div class="a" style="left:1305px;top:760px;width:88px;height:23px;background:#ecf5fb;"></div>
<div class="a" style="left:1308px;top:763px;width:82px;height:17px;background:#bee3fb;"></div>
<div class="a" style="left:1393px;top:763px;width:78px;height:17px;background:#ffffff;"></div>
<div class="t" style="top:765.69px;font-size:11px;color:#333333;left:1316px;width:150px;text-align:right;">-</div>
<div class="a" style="left:1471px;top:760px;width:113px;height:23px;background:#ecf5fb;"></div>
<div class="a" style="left:1474px;top:763px;width:107px;height:17px;background:#bee3fb;"></div>
<div class="a" style="left:1581px;top:760px;width:78px;height:23px;background:#ecf5fb;"></div>
<div class="a" style="left:1584px;top:763px;width:72px;height:17px;background:#bee3fb;"></div>
<div class="t" style="top:765.69px;font-size:11px;color:#2a3a50;left:1545.0px;width:150px;text-align:center;">Low</div>
<div class="a" style="left:1656px;top:760px;width:85px;height:23px;background:#ecf5fb;"></div>
<div class="a" style="left:1659px;top:763px;width:79px;height:17px;background:#bee3fb;"></div>
<div class="a" style="left:1760px;top:763px;width:65px;height:17px;background:#ffffff;"></div>
<div class="t" style="top:765.69px;font-size:11px;color:#333333;left:1720px;width:100px;text-align:right;">-</div>
<div class="a" style="left:1828px;top:763px;width:65px;height:17px;background:#ffffff;"></div>
<div class="t" style="top:765.69px;font-size:11px;color:#333333;left:1788px;width:100px;text-align:right;">-</div>
<div class="t" style="top:785.69px;font-size:11px;color:#c0c0c0;letter-spacing:0.2px;left:33px;">D10 (Sales &amp; Services)</div>
<div class="a" style="left:182px;top:780px;width:179px;height:23px;background:#ecf5fb;"></div>
<div class="a" style="left:185px;top:783px;width:173px;height:17px;background:#bee3fb;"></div>
<div class="t" style="top:785.69px;font-size:11px;color:#404040;letter-spacing:0.2px;left:371px;">Planned 01</div>
<div class="a" style="left:21px;top:801px;width:161px;height:1px;background:#d4d4d4;"></div>
<div class="a" style="left:361px;top:801px;width:110px;height:1px;background:#d4d4d4;"></div>
<div class="a" style="left:488px;top:780px;width:109px;height:23px;background:#ecf5fb;"></div>
<div class="a" style="left:491px;top:783px;width:103px;height:17px;background:#bee3fb;"></div>
<div class="a" style="left:594px;top:780px;width:82px;height:23px;background:#ecf5fb;"></div>
<div class="a" style="left:597px;top:783px;width:76px;height:17px;background:#bee3fb;"></div>
<div class="a" style="left:673px;top:780px;width:113px;height:23px;background:#ecf5fb;"></div>
<div class="a" style="left:676px;top:783px;width:107px;height:17px;background:#bee3fb;"></div>
<div class="a" style="left:783px;top:780px;width:91px;height:23px;background:#ecf5fb;"></div>
<div class="a" style="left:786px;top:783px;width:85px;height:17px;background:#bee3fb;"></div>
<div class="a" style="left:871px;top:780px;width:85px;height:23px;background:#ecf5fb;"></div>
<div class="a" style="left:874px;top:783px;width:79px;height:17px;background:#bee3fb;"></div>
<div class="a" style="left:953px;top:780px;width:85px;height:23px;background:#ecf5fb;"></div>
<div class="a" style="left:956px;top:783px;width:79px;height:17px;background:#bee3fb;"></div>
<div class="a" style="left:1035px;top:780px;width:85px;height:23px;background:#ecf5fb;"></div>
<div class="a" style="left:1038px;top:783px;width:79px;height:17px;background:#bee3fb;"></div>
<div class="a" style="left:1117px;top:780px;width:111px;height:23px;background:#ecf5fb;"></div>
<div class="a" style="left:1120px;top:783px;width:105px;height:17px;background:#bee3fb;"></div>
<div class="a" style="left:1225px;top:780px;width:83px;height:23px;background:#ecf5fb;"></div>
<div class="a" style="left:1228px;top:783px;width:77px;height:17px;background:#bee3fb;"></div>
<div class="a" style="left:1305px;top:780px;width:88px;height:23px;background:#ecf5fb;"></div>
<div class="a" style="left:1308px;top:783px;width:82px;height:17px;background:#bee3fb;"></div>
<div class="a" style="left:1393px;top:783px;width:78px;height:17px;background:#ffffff;"></div>
<div class="t" style="top:785.69px;font-size:11px;color:#333333;left:1316px;width:150px;text-align:right;">-</div>
<div class="a" style="left:1471px;top:780px;width:113px;height:23px;background:#ecf5fb;"></div>
<div class="a" style="left:1474px;top:783px;width:107px;height:17px;background:#bee3fb;"></div>
<div class="a" style="left:1581px;top:780px;width:78px;height:23px;background:#ecf5fb;"></div>
<div class="a" style="left:1584px;top:783px;width:72px;height:17px;background:#bee3fb;"></div>
<div class="a" style="left:1656px;top:780px;width:85px;height:23px;background:#ecf5fb;"></div>
<div class="a" style="left:1659px;top:783px;width:79px;height:17px;background:#bee3fb;"></div>
<div class="a" style="left:1760px;top:783px;width:65px;height:17px;background:#ffffff;"></div>
<div class="t" style="top:785.69px;font-size:11px;color:#333333;left:1720px;width:100px;text-align:right;">-</div>
<div class="a" style="left:1828px;top:783px;width:65px;height:17px;background:#ffffff;"></div>
<div class="t" style="top:785.69px;font-size:11px;color:#333333;left:1788px;width:100px;text-align:right;">-</div>
<div class="t" style="top:805.69px;font-size:11px;color:#c0c0c0;letter-spacing:0.2px;left:33px;">D10 (Sales &amp; Services)</div>
<div class="a" style="left:182px;top:800px;width:179px;height:23px;background:#ecf5fb;"></div>
<div class="a" style="left:185px;top:803px;width:173px;height:17px;background:#bee3fb;"></div>
<div class="t" style="top:805.69px;font-size:11px;color:#404040;letter-spacing:0.2px;left:371px;">Planned 02</div>
<div class="a" style="left:21px;top:821px;width:161px;height:1px;background:#d4d4d4;"></div>
<div class="a" style="left:361px;top:821px;width:110px;height:1px;background:#d4d4d4;"></div>
<div class="a" style="left:488px;top:800px;width:109px;height:23px;background:#ecf5fb;"></div>
<div class="a" style="left:491px;top:803px;width:103px;height:17px;background:#bee3fb;"></div>
<div class="a" style="left:594px;top:800px;width:82px;height:23px;background:#ecf5fb;"></div>
<div class="a" style="left:597px;top:803px;width:76px;height:17px;background:#bee3fb;"></div>
<div class="a" style="left:673px;top:800px;width:113px;height:23px;background:#ecf5fb;"></div>
<div class="a" style="left:676px;top:803px;width:107px;height:17px;background:#bee3fb;"></div>
<div class="a" style="left:783px;top:800px;width:91px;height:23px;background:#ecf5fb;"></div>
<div class="a" style="left:786px;top:803px;width:85px;height:17px;background:#bee3fb;"></div>
<div class="a" style="left:871px;top:800px;width:85px;height:23px;background:#ecf5fb;"></div>
<div class="a" style="left:874px;top:803px;width:79px;height:17px;background:#bee3fb;"></div>
<div class="a" style="left:953px;top:800px;width:85px;height:23px;background:#ecf5fb;"></div>
<div class="a" style="left:956px;top:803px;width:79px;height:17px;background:#bee3fb;"></div>
<div class="a" style="left:1035px;top:800px;width:85px;height:23px;background:#ecf5fb;"></div>
<div class="a" style="left:1038px;top:803px;width:79px;height:17px;background:#bee3fb;"></div>
<div class="a" style="left:1117px;top:800px;width:111px;height:23px;background:#ecf5fb;"></div>
<div class="a" style="left:1120px;top:803px;width:105px;height:17px;background:#bee3fb;"></div>
<div class="a" style="left:1225px;top:800px;width:83px;height:23px;background:#ecf5fb;"></div>
<div class="a" style="left:1228px;top:803px;width:77px;height:17px;background:#bee3fb;"></div>
<div class="a" style="left:1305px;top:800px;width:88px;height:23px;background:#ecf5fb;"></div>
<div class="a" style="left:1308px;top:803px;width:82px;height:17px;background:#bee3fb;"></div>
<div class="a" style="left:1393px;top:803px;width:78px;height:17px;background:#ffffff;"></div>
<div class="t" style="top:805.69px;font-size:11px;color:#333333;left:1316px;width:150px;text-align:right;">-</div>
<div class="a" style="left:1471px;top:800px;width:113px;height:23px;background:#ecf5fb;"></div>
<div class="a" style="left:1474px;top:803px;width:107px;height:17px;background:#bee3fb;"></div>
<div class="a" style="left:1581px;top:800px;width:78px;height:23px;background:#ecf5fb;"></div>
<div class="a" style="left:1584px;top:803px;width:72px;height:17px;background:#bee3fb;"></div>
<div class="a" style="left:1656px;top:800px;width:85px;height:23px;background:#ecf5fb;"></div>
<div class="a" style="left:1659px;top:803px;width:79px;height:17px;background:#bee3fb;"></div>
<div class="a" style="left:1760px;top:803px;width:65px;height:17px;background:#ffffff;"></div>
<div class="t" style="top:805.69px;font-size:11px;color:#333333;left:1720px;width:100px;text-align:right;">-</div>
<div class="a" style="left:1828px;top:803px;width:65px;height:17px;background:#ffffff;"></div>
<div class="t" style="top:805.69px;font-size:11px;color:#333333;left:1788px;width:100px;text-align:right;">-</div>
<div class="t" style="top:825.69px;font-size:11px;color:#c0c0c0;letter-spacing:0.2px;left:33px;">D10 (Sales &amp; Services)</div>
<div class="a" style="left:182px;top:820px;width:179px;height:23px;background:#ecf5fb;"></div>
<div class="a" style="left:185px;top:823px;width:173px;height:17px;background:#bee3fb;"></div>
<div class="t" style="top:825.69px;font-size:11px;color:#404040;letter-spacing:0.2px;left:371px;">Planned 03</div>
<div class="a" style="left:21px;top:841px;width:161px;height:1px;background:#d4d4d4;"></div>
<div class="a" style="left:361px;top:841px;width:110px;height:1px;background:#d4d4d4;"></div>
<div class="a" style="left:488px;top:820px;width:109px;height:23px;background:#ecf5fb;"></div>
<div class="a" style="left:491px;top:823px;width:103px;height:17px;background:#bee3fb;"></div>
<div class="a" style="left:594px;top:820px;width:82px;height:23px;background:#ecf5fb;"></div>
<div class="a" style="left:597px;top:823px;width:76px;height:17px;background:#bee3fb;"></div>
<div class="a" style="left:673px;top:820px;width:113px;height:23px;background:#ecf5fb;"></div>
<div class="a" style="left:676px;top:823px;width:107px;height:17px;background:#bee3fb;"></div>
<div class="a" style="left:783px;top:820px;width:91px;height:23px;background:#ecf5fb;"></div>
<div class="a" style="left:786px;top:823px;width:85px;height:17px;background:#bee3fb;"></div>
<div class="a" style="left:871px;top:820px;width:85px;height:23px;background:#ecf5fb;"></div>
<div class="a" style="left:874px;top:823px;width:79px;height:17px;background:#bee3fb;"></div>
<div class="a" style="left:953px;top:820px;width:85px;height:23px;background:#ecf5fb;"></div>
<div class="a" style="left:956px;top:823px;width:79px;height:17px;background:#bee3fb;"></div>
<div class="a" style="left:1035px;top:820px;width:85px;height:23px;background:#ecf5fb;"></div>
<div class="a" style="left:1038px;top:823px;width:79px;height:17px;background:#bee3fb;"></div>
<div class="a" style="left:1117px;top:820px;width:111px;height:23px;background:#ecf5fb;"></div>
<div class="a" style="left:1120px;top:823px;width:105px;height:17px;background:#bee3fb;"></div>
<div class="a" style="left:1225px;top:820px;width:83px;height:23px;background:#ecf5fb;"></div>
<div class="a" style="left:1228px;top:823px;width:77px;height:17px;background:#bee3fb;"></div>
<div class="a" style="left:1305px;top:820px;width:88px;height:23px;background:#ecf5fb;"></div>
<div class="a" style="left:1308px;top:823px;width:82px;height:17px;background:#bee3fb;"></div>
<div class="a" style="left:1393px;top:823px;width:78px;height:17px;background:#ffffff;"></div>
<div class="t" style="top:825.69px;font-size:11px;color:#333333;left:1316px;width:150px;text-align:right;">-</div>
<div class="a" style="left:1471px;top:820px;width:113px;height:23px;background:#ecf5fb;"></div>
<div class="a" style="left:1474px;top:823px;width:107px;height:17px;background:#bee3fb;"></div>
<div class="a" style="left:1581px;top:820px;width:78px;height:23px;background:#ecf5fb;"></div>
<div class="a" style="left:1584px;top:823px;width:72px;height:17px;background:#bee3fb;"></div>
<div class="a" style="left:1656px;top:820px;width:85px;height:23px;background:#ecf5fb;"></div>
<div class="a" style="left:1659px;top:823px;width:79px;height:17px;background:#bee3fb;"></div>
<div class="a" style="left:1760px;top:823px;width:65px;height:17px;background:#ffffff;"></div>
<div class="t" style="top:825.69px;font-size:11px;color:#333333;left:1720px;width:100px;text-align:right;">-</div>
<div class="a" style="left:1828px;top:823px;width:65px;height:17px;background:#ffffff;"></div>
<div class="t" style="top:825.69px;font-size:11px;color:#333333;left:1788px;width:100px;text-align:right;">-</div>
<div class="t" style="top:845.69px;font-size:11px;color:#c0c0c0;letter-spacing:0.2px;left:33px;">D10 (Sales &amp; Services)</div>
<div class="a" style="left:182px;top:840px;width:179px;height:23px;background:#ecf5fb;"></div>
<div class="a" style="left:185px;top:843px;width:173px;height:17px;background:#bee3fb;"></div>
<div class="t" style="top:845.69px;font-size:11px;color:#404040;letter-spacing:0.2px;left:371px;">Planned 04</div>
<div class="a" style="left:21px;top:861px;width:161px;height:1px;background:#d4d4d4;"></div>
<div class="a" style="left:361px;top:861px;width:110px;height:1px;background:#d4d4d4;"></div>
<div class="a" style="left:488px;top:840px;width:109px;height:23px;background:#ecf5fb;"></div>
<div class="a" style="left:491px;top:843px;width:103px;height:17px;background:#bee3fb;"></div>
<div class="a" style="left:594px;top:840px;width:82px;height:23px;background:#ecf5fb;"></div>
<div class="a" style="left:597px;top:843px;width:76px;height:17px;background:#bee3fb;"></div>
<div class="a" style="left:673px;top:840px;width:113px;height:23px;background:#ecf5fb;"></div>
<div class="a" style="left:676px;top:843px;width:107px;height:17px;background:#bee3fb;"></div>
<div class="a" style="left:783px;top:840px;width:91px;height:23px;background:#ecf5fb;"></div>
<div class="a" style="left:786px;top:843px;width:85px;height:17px;background:#bee3fb;"></div>
<div class="a" style="left:871px;top:840px;width:85px;height:23px;background:#ecf5fb;"></div>
<div class="a" style="left:874px;top:843px;width:79px;height:17px;background:#bee3fb;"></div>
<div class="a" style="left:953px;top:840px;width:85px;height:23px;background:#ecf5fb;"></div>
<div class="a" style="left:956px;top:843px;width:79px;height:17px;background:#bee3fb;"></div>
<div class="a" style="left:1035px;top:840px;width:85px;height:23px;background:#ecf5fb;"></div>
<div class="a" style="left:1038px;top:843px;width:79px;height:17px;background:#bee3fb;"></div>
<div class="a" style="left:1117px;top:840px;width:111px;height:23px;background:#ecf5fb;"></div>
<div class="a" style="left:1120px;top:843px;width:105px;height:17px;background:#bee3fb;"></div>
<div class="a" style="left:1225px;top:840px;width:83px;height:23px;background:#ecf5fb;"></div>
<div class="a" style="left:1228px;top:843px;width:77px;height:17px;background:#bee3fb;"></div>
<div class="a" style="left:1305px;top:840px;width:88px;height:23px;background:#ecf5fb;"></div>
<div class="a" style="left:1308px;top:843px;width:82px;height:17px;background:#bee3fb;"></div>
<div class="a" style="left:1393px;top:843px;width:78px;height:17px;background:#ffffff;"></div>
<div class="t" style="top:845.69px;font-size:11px;color:#333333;left:1316px;width:150px;text-align:right;">-</div>
<div class="a" style="left:1471px;top:840px;width:113px;height:23px;background:#ecf5fb;"></div>
<div class="a" style="left:1474px;top:843px;width:107px;height:17px;background:#bee3fb;"></div>
<div class="a" style="left:1581px;top:840px;width:78px;height:23px;background:#ecf5fb;"></div>
<div class="a" style="left:1584px;top:843px;width:72px;height:17px;background:#bee3fb;"></div>
<div class="a" style="left:1656px;top:840px;width:85px;height:23px;background:#ecf5fb;"></div>
<div class="a" style="left:1659px;top:843px;width:79px;height:17px;background:#bee3fb;"></div>
<div class="a" style="left:1760px;top:843px;width:65px;height:17px;background:#ffffff;"></div>
<div class="t" style="top:845.69px;font-size:11px;color:#333333;left:1720px;width:100px;text-align:right;">-</div>
<div class="a" style="left:1828px;top:843px;width:65px;height:17px;background:#ffffff;"></div>
<div class="t" style="top:845.69px;font-size:11px;color:#333333;left:1788px;width:100px;text-align:right;">-</div>
<div class="t" style="top:865.69px;font-size:11px;color:#c0c0c0;letter-spacing:0.2px;left:33px;">D10 (Sales &amp; Services)</div>
<div class="a" style="left:182px;top:860px;width:179px;height:23px;background:#ecf5fb;"></div>
<div class="a" style="left:185px;top:863px;width:173px;height:17px;background:#bee3fb;"></div>
<div class="t" style="top:865.69px;font-size:11px;color:#404040;letter-spacing:0.2px;left:371px;">Planned 05</div>
<div class="a" style="left:21px;top:881px;width:161px;height:1px;background:#d4d4d4;"></div>
<div class="a" style="left:361px;top:881px;width:110px;height:1px;background:#d4d4d4;"></div>
<div class="a" style="left:488px;top:860px;width:109px;height:23px;background:#ecf5fb;"></div>
<div class="a" style="left:491px;top:863px;width:103px;height:17px;background:#bee3fb;"></div>
<div class="a" style="left:594px;top:860px;width:82px;height:23px;background:#ecf5fb;"></div>
<div class="a" style="left:597px;top:863px;width:76px;height:17px;background:#bee3fb;"></div>
<div class="a" style="left:673px;top:860px;width:113px;height:23px;background:#ecf5fb;"></div>
<div class="a" style="left:676px;top:863px;width:107px;height:17px;background:#bee3fb;"></div>
<div class="a" style="left:783px;top:860px;width:91px;height:23px;background:#ecf5fb;"></div>
<div class="a" style="left:786px;top:863px;width:85px;height:17px;background:#bee3fb;"></div>
<div class="a" style="left:871px;top:860px;width:85px;height:23px;background:#ecf5fb;"></div>
<div class="a" style="left:874px;top:863px;width:79px;height:17px;background:#bee3fb;"></div>
<div class="a" style="left:953px;top:860px;width:85px;height:23px;background:#ecf5fb;"></div>
<div class="a" style="left:956px;top:863px;width:79px;height:17px;background:#bee3fb;"></div>
<div class="a" style="left:1035px;top:860px;width:85px;height:23px;background:#ecf5fb;"></div>
<div class="a" style="left:1038px;top:863px;width:79px;height:17px;background:#bee3fb;"></div>
<div class="a" style="left:1117px;top:860px;width:111px;height:23px;background:#ecf5fb;"></div>
<div class="a" style="left:1120px;top:863px;width:105px;height:17px;background:#bee3fb;"></div>
<div class="a" style="left:1225px;top:860px;width:83px;height:23px;background:#ecf5fb;"></div>
<div class="a" style="left:1228px;top:863px;width:77px;height:17px;background:#bee3fb;"></div>
<div class="a" style="left:1305px;top:860px;width:88px;height:23px;background:#ecf5fb;"></div>
<div class="a" style="left:1308px;top:863px;width:82px;height:17px;background:#bee3fb;"></div>
<div class="a" style="left:1393px;top:863px;width:78px;height:17px;background:#ffffff;"></div>
<div class="t" style="top:865.69px;font-size:11px;color:#333333;left:1316px;width:150px;text-align:right;">-</div>
<div class="a" style="left:1471px;top:860px;width:113px;height:23px;background:#ecf5fb;"></div>
<div class="a" style="left:1474px;top:863px;width:107px;height:17px;background:#bee3fb;"></div>
<div class="a" style="left:1581px;top:860px;width:78px;height:23px;background:#ecf5fb;"></div>
<div class="a" style="left:1584px;top:863px;width:72px;height:17px;background:#bee3fb;"></div>
<div class="a" style="left:1656px;top:860px;width:85px;height:23px;background:#ecf5fb;"></div>
<div class="a" style="left:1659px;top:863px;width:79px;height:17px;background:#bee3fb;"></div>
<div class="a" style="left:1760px;top:863px;width:65px;height:17px;background:#ffffff;"></div>
<div class="t" style="top:865.69px;font-size:11px;color:#333333;left:1720px;width:100px;text-align:right;">-</div>
<div class="a" style="left:1828px;top:863px;width:65px;height:17px;background:#ffffff;"></div>
<div class="t" style="top:865.69px;font-size:11px;color:#333333;left:1788px;width:100px;text-align:right;">-</div>
<div class="a" style="left:1898px;top:204px;width:22px;height:787px;background:#e6e6e6;"></div>
<div class="a" style="left:1902px;top:220px;width:15px;height:755px;background:#dcdcdc;"></div>
<div class="a" style="left:1902px;top:205px;width:13px;height:13px;background:#fff;border:1px solid #c6c6c6;"></div>
<svg style="left:1905px;top:209px" width="9" height="5"><path d="M0 5L4.5 0L9 5Z" fill="#666"/></svg>
<div class="a" style="left:1902px;top:365px;width:13px;height:297px;background:#fff;border:1px solid #c6c6c6;"></div>
<div class="a" style="left:1902px;top:975px;width:13px;height:13px;background:#fff;border:1px solid #c6c6c6;"></div>
<svg style="left:1905px;top:981px" width="8" height="4"><path d="M0 0L4 4L8 0Z" fill="#555"/></svg>
<div class="a" style="left:0px;top:991px;width:1920px;height:27px;background:#e6e6e6;"></div>
<div class="a" style="left:0px;top:1017px;width:1920px;height:1px;background:#d0d0d0;"></div>
<svg style="left:27px;top:1000px" width="5" height="8"><path d="M5 0L0 4L5 8Z" fill="#c0c0c0"/></svg>
<svg style="left:56px;top:1000px" width="5" height="8"><path d="M0 0L5 4L0 8Z" fill="#c0c0c0"/></svg>
<div class="a" style="left:100px;top:990px;width:57px;height:24px;background:linear-gradient(#ffffff 15%,#b3dfc6);border-left:1px solid #8a8a8a;border-right:1px solid #8a8a8a;"></div>
<div class="a" style="left:100px;top:1013px;width:58px;height:2px;background:#1e6b3e;"></div>
<div class="t" style="top:997.42px;font-size:12.5px;color:#1e6a40;font-weight:bold;left:98.5px;width:60px;text-align:center;">Input</div>
<div class="a" style="left:160px;top:993px;width:76px;height:22px;background:#3fa9f5;"></div>
<div class="t" style="top:997.84px;font-size:12px;color:#0a1a5a;left:158.0px;width:80px;text-align:center;">Summary</div>
<div class="a" style="left:238px;top:994px;width:1px;height:20px;background:#a0a0a0;"></div>
<svg style="left:272px;top:996px" width="16" height="16"><circle cx="8" cy="8" r="7.2" fill="none" stroke="#666" stroke-width="1.2"/><path d="M8 4V12M4 8H12" stroke="#666" stroke-width="1.4"/></svg>
<div class="a" style="left:1152px;top:999px;width:2px;height:2px;background:#999;"></div>
<div class="a" style="left:1152px;top:1003px;width:2px;height:2px;background:#999;"></div>
<div class="a" style="left:1152px;top:1007px;width:2px;height:2px;background:#999;"></div>
<div class="a" style="left:1169px;top:997px;width:14px;height:14px;background:#fff;border:1px solid #aaa;"></div>
<svg style="left:1174px;top:1000px" width="5" height="8"><path d="M5 0L0 4L5 8Z" fill="#555"/></svg>
<div class="a" style="left:1403px;top:997px;width:480px;height:16px;background:#d6d6d6;"></div>
<div class="a" style="left:1188px;top:997px;width:212px;height:14px;background:#fff;border:1px solid #aaa;"></div>
<div class="a" style="left:1883px;top:997px;width:14px;height:14px;background:#fff;border:1px solid #aaa;"></div>
<svg style="left:1889px;top:1000px" width="5" height="8"><path d="M0 0L5 4L0 8Z" fill="#555"/></svg>
<div class="a" style="left:0px;top:1018px;width:1920px;height:22px;background:#f3f3f3;"></div>
<div class="a" style="left:0px;top:1040px;width:1920px;height:1px;background:#1a1a1a;"></div>
<div class="t" style="top:1023.27px;font-size:11.5px;color:#333;left:7px;transform:scaleX(0.92);transform-origin:left top;">Ready</div>
<svg style="left:58px;top:1022px" width="14" height="13"><circle cx="3" cy="3" r="2.5" fill="#555"/><rect x="1" y="5" width="12" height="7.5" fill="none" stroke="#555"/><path d="M6 2H13M4 8H12M4 10H12M6 6V12M9 6V12" stroke="#555" stroke-width="0.8"/></svg>
<div class="a" style="left:1634px;top:1018px;width:38px;height:22px;background:#c6c6c6;"></div>
<svg style="left:1646px;top:1022px" width="13" height="13"><rect x="0.5" y="0.5" width="12" height="12" fill="none" stroke="#555"/><path d="M4.5 0V13M8.5 0V13M0 4.5H13M0 8.5H13" stroke="#555"/></svg>
<svg style="left:1684px;top:1022px" width="14" height="13"><rect x="0.5" y="0.5" width="13" height="12" fill="none" stroke="#555"/><rect x="3.5" y="2.5" width="7" height="8" fill="none" stroke="#555"/><path d="M5 4.5H9M5 6.5H9M5 8.5H9" stroke="#555"/></svg>
<svg style="left:1722px;top:1022px" width="14" height="13"><rect x="0.5" y="0.5" width="13" height="12" fill="none" stroke="#555"/><path d="M0.5 6.5H8.5V0.5M4.5 0.5V6.5" fill="none" stroke="#555"/></svg>
<div class="a" style="left:1753px;top:1028px;width:6px;height:2px;background:#555;"></div>
<div class="a" style="left:1764px;top:1029px;width:100px;height:1px;background:#aaa;"></div>
<div class="a" style="left:1811px;top:1023px;width:5px;height:11px;background:#777;"></div>
<svg style="left:1866px;top:1024px" width="9" height="9"><path d="M4.5 0V9M0 4.5H9" stroke="#555" stroke-width="1.6"/></svg>
<div class="t" style="top:1023.27px;font-size:11.5px;color:#333;left:1885px;transform:scaleX(0.93);transform-origin:left top;">100%</div>
</body></html>
